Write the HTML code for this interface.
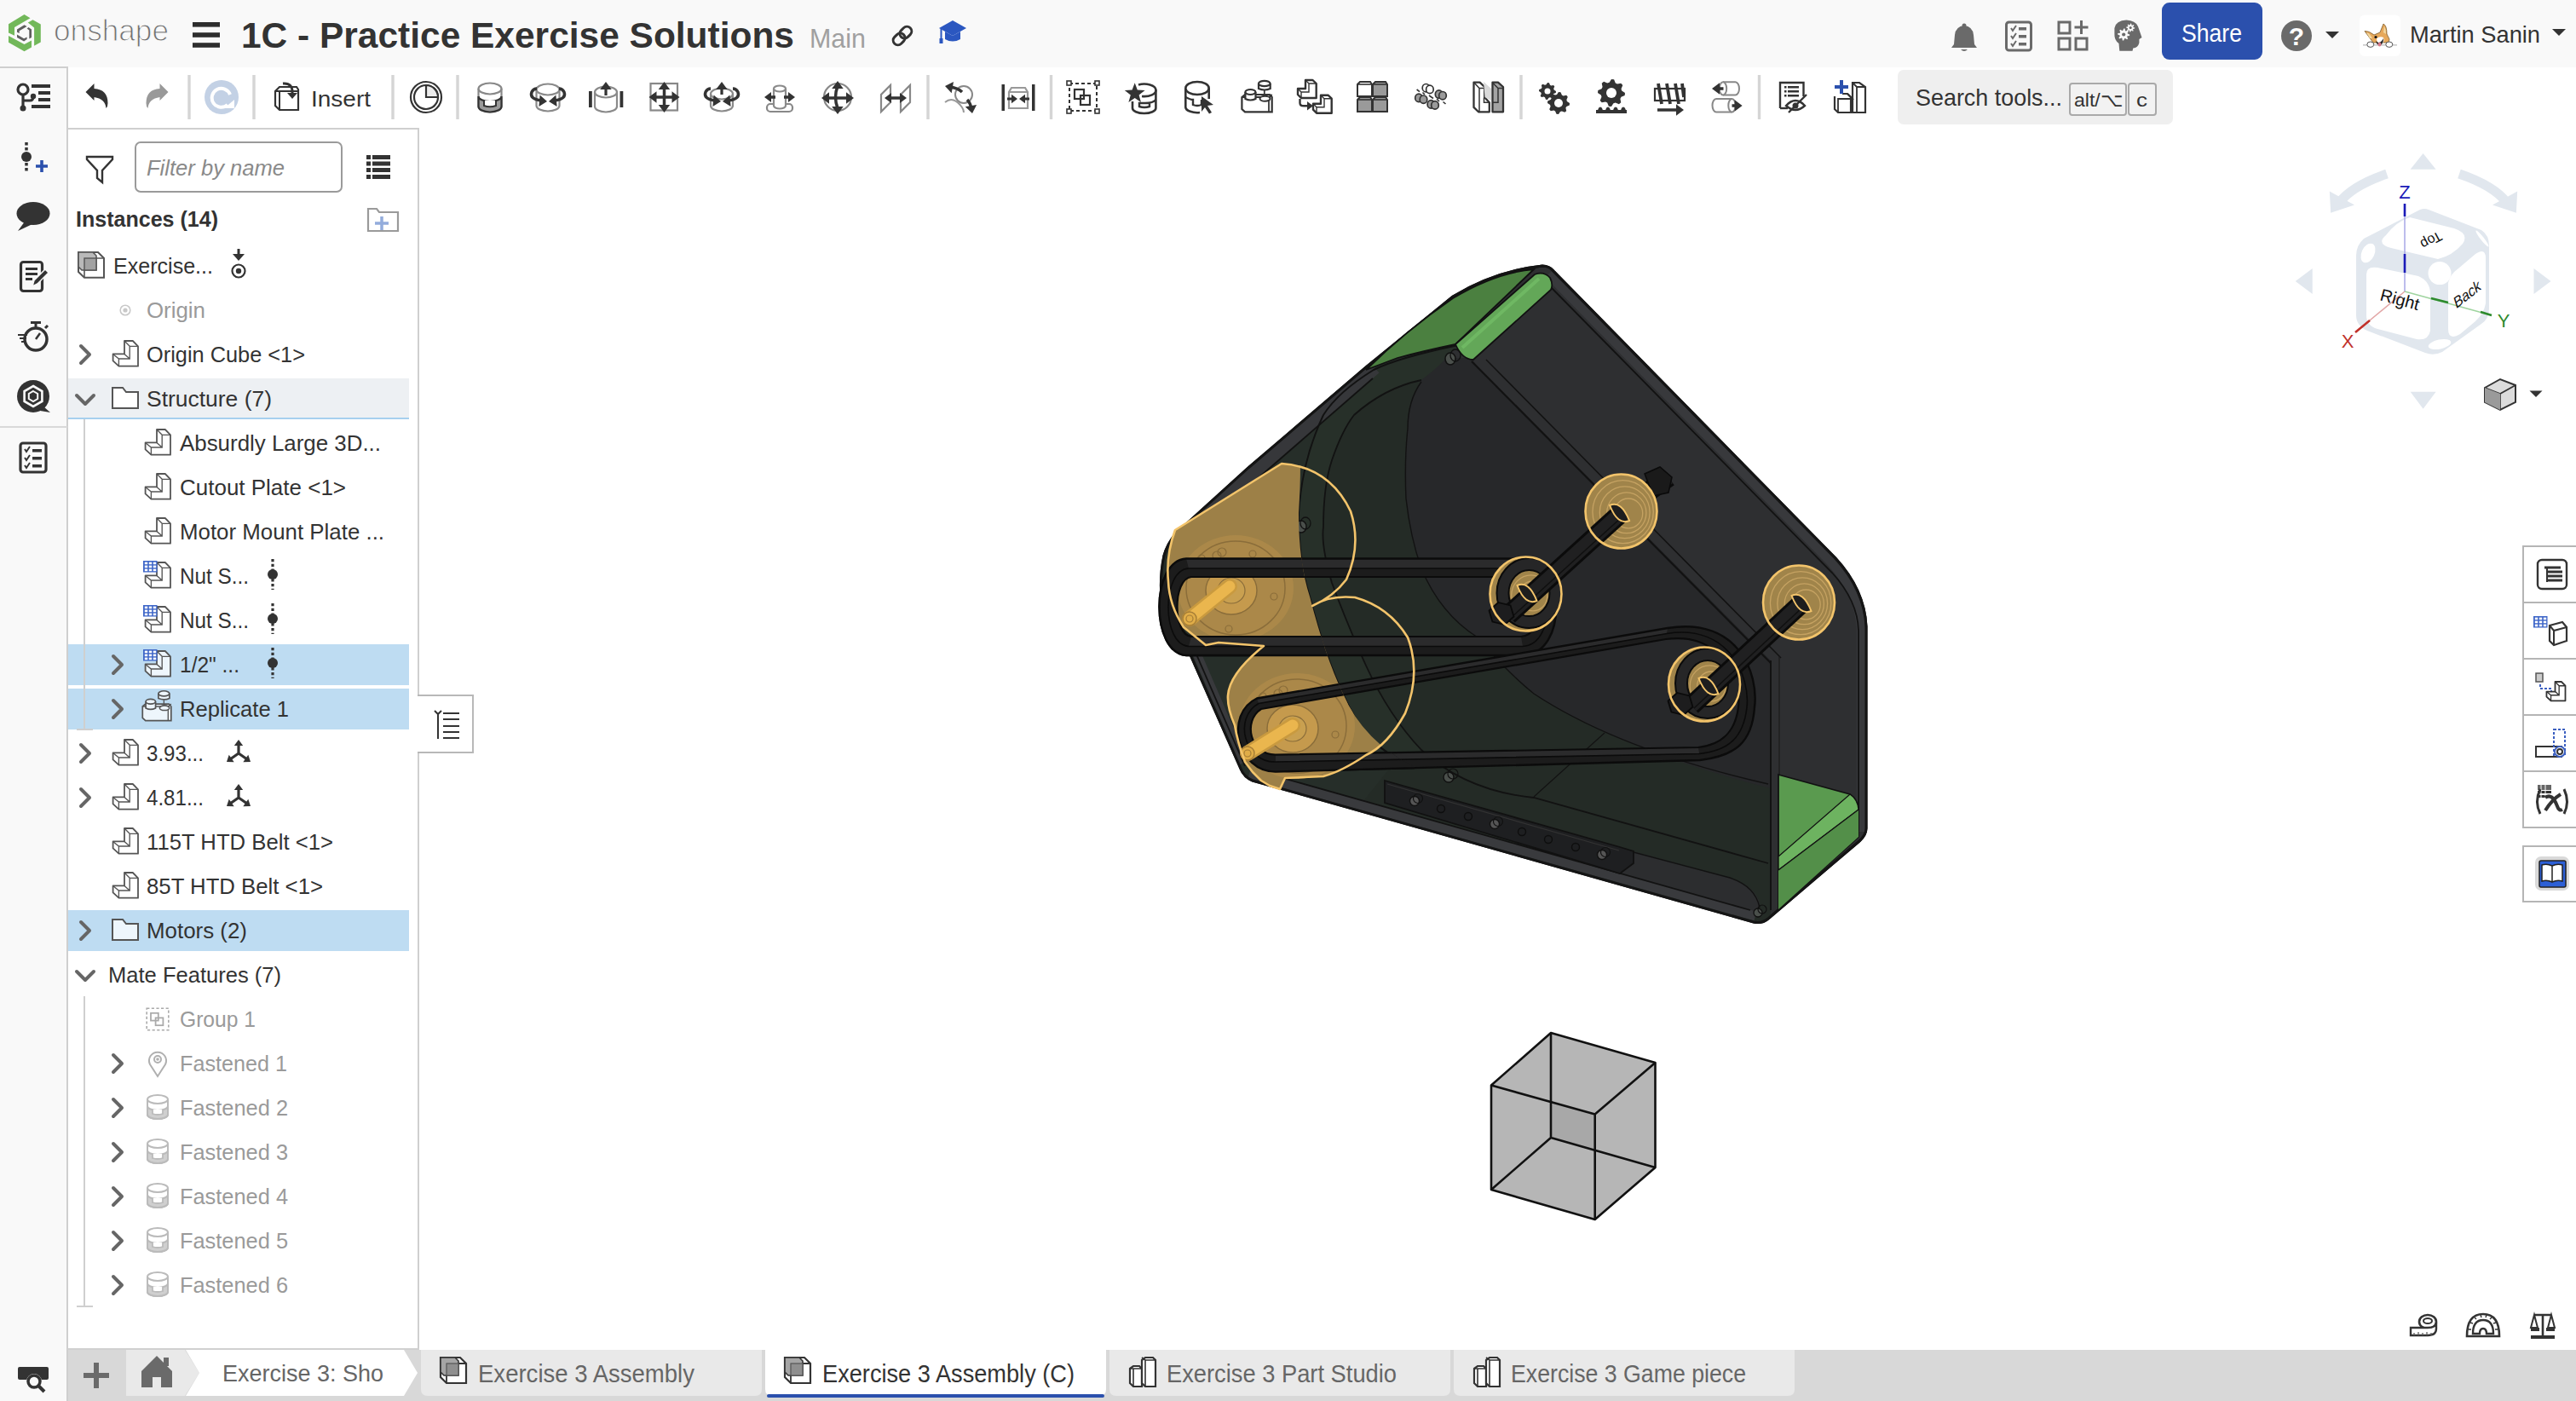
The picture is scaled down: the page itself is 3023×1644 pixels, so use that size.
<!DOCTYPE html>
<html><head><meta charset="utf-8"><title>Onshape</title>
<style>
html,body{margin:0;padding:0;width:3023px;height:1644px;overflow:hidden;background:#fff}
svg{position:absolute;left:0;top:0;display:block}
text{font-family:"Liberation Sans",sans-serif}
</style></head><body>
<svg width="3023" height="1644" viewBox="0 0 3023 1644">
<defs><clipPath id="silclip"><path d="M1810,312 Q1818,312 1823,318 L2154,655 Q2188,692 2190,735 L2190,972 Q2190,980 2182,987 L2075,1078 Q2068,1084 2058,1082 L1470,916 Q1460,912 1456,902 L1392,757 Q1372,745 1364,712 Q1360,680 1366,652 Q1370,638 1380,626 L1465,549 L1603,431 L1705,348 Q1755,318 1810,312 Z"/></clipPath><clipPath id="motclip"><path d="M1300,500 L1524,500 Q1528,540 1524,602 Q1524,660 1537,700 Q1555,770 1576,814 Q1600,870 1660,900 L1660,1000 L1300,1000 Z"/></clipPath></defs>
<rect x="0" y="0" width="3023" height="1644" fill="#ffffff" />
<rect x="0" y="0" width="3023" height="79" fill="#f9f9f9" />
<rect x="0" y="79" width="79" height="1565" fill="#f9f9f9" />
<rect x="0" y="78" width="80" height="2" fill="#cfcfcf" />
<rect x="78" y="78" width="2" height="1566" fill="#cfcfcf" />
<rect x="0" y="500" width="79" height="2" fill="#d9d9d9" />
<rect x="80" y="150" width="412" height="2" fill="#cfcfcf" />
<rect x="490" y="150" width="2" height="1434" fill="#cfcfcf" />
<rect x="80" y="1584" width="2943" height="60" fill="#d8d8d8" />
<rect x="80" y="1582" width="412" height="2" fill="#d0d0d0" />
<text x="63" y="48" font-size="35" fill="#707070" stroke="#f9f9f9" stroke-width="1.1" textLength="135" lengthAdjust="spacingAndGlyphs">onshape</text>
<text x="283" y="56" font-size="43" fill="#333" font-weight="bold" textLength="649" lengthAdjust="spacingAndGlyphs">1C - Practice Exercise Solutions</text>
<text x="950" y="56" font-size="32" fill="#a0a0a0" textLength="66" lengthAdjust="spacingAndGlyphs">Main</text>
<rect x="2537" y="3" width="118" height="67" rx="9" fill="#2b50ad"/>
<text x="2560" y="49" font-size="29.5" fill="#ffffff" textLength="71" lengthAdjust="spacingAndGlyphs">Share</text>
<text x="2828" y="50" font-size="28" fill="#333" textLength="153" lengthAdjust="spacingAndGlyphs">Martin Sanin</text>
<rect x="2227" y="82" width="323" height="64" rx="7" fill="#efefef"/>
<text x="2248" y="124" font-size="28" fill="#333" textLength="172" lengthAdjust="spacingAndGlyphs">Search tools...</text>
<rect x="2429" y="98" width="66" height="37" rx="3" fill="#f2f2f2" stroke="#a9a9a9" stroke-width="2"/>
<text x="2434" y="125" font-size="22" fill="#333" textLength="57" lengthAdjust="spacingAndGlyphs">alt/⌥</text>
<rect x="2498" y="98" width="32" height="37" rx="3" fill="#f2f2f2" stroke="#a9a9a9" stroke-width="2"/>
<text x="2507" y="125" font-size="22" fill="#333" textLength="13" lengthAdjust="spacingAndGlyphs">c</text>
<text x="365" y="125" font-size="26" fill="#333" textLength="70" lengthAdjust="spacingAndGlyphs">Insert</text>
<rect x="159" y="167" width="242" height="58" rx="6" fill="#fff" stroke="#9a9a9a" stroke-width="2"/>
<text x="172" y="206" font-size="26" fill="#8a8a8a" font-style="italic" textLength="162" lengthAdjust="spacingAndGlyphs">Filter by name</text>
<text x="89" y="266" font-size="26" fill="#333" font-weight="bold" textLength="167" lengthAdjust="spacingAndGlyphs">Instances (14)</text>
<rect x="80" y="444" width="400" height="47" fill="#edf0f3" />
<rect x="80" y="490" width="400" height="2" fill="#a6d0ee" />
<rect x="80" y="756" width="400" height="48" fill="#bedcf2" />
<rect x="80" y="808" width="400" height="48" fill="#bedcf2" />
<rect x="80" y="1068" width="400" height="48" fill="#bedcf2" />
<rect x="98" y="492" width="2" height="363" fill="#cfcfcf" />
<rect x="90" y="855" width="19" height="2" fill="#cfcfcf" />
<rect x="98" y="1169" width="2" height="364" fill="#cfcfcf" />
<rect x="90" y="1532" width="19" height="2" fill="#cfcfcf" />
<text x="133" y="321" font-size="26" fill="#333" textLength="117" lengthAdjust="spacingAndGlyphs">Exercise...</text>
<text x="172" y="373" font-size="26" fill="#9a9a9a" textLength="69" lengthAdjust="spacingAndGlyphs">Origin</text>
<text x="172" y="425" font-size="26" fill="#333" textLength="186" lengthAdjust="spacingAndGlyphs">Origin Cube &lt;1&gt;</text>
<text x="172" y="477" font-size="26" fill="#333" textLength="147" lengthAdjust="spacingAndGlyphs">Structure (7)</text>
<text x="211" y="529" font-size="26" fill="#333" textLength="236" lengthAdjust="spacingAndGlyphs">Absurdly Large 3D...</text>
<text x="211" y="581" font-size="26" fill="#333" textLength="195" lengthAdjust="spacingAndGlyphs">Cutout Plate &lt;1&gt;</text>
<text x="211" y="633" font-size="26" fill="#333" textLength="240" lengthAdjust="spacingAndGlyphs">Motor Mount Plate ...</text>
<text x="211" y="685" font-size="26" fill="#333" textLength="81" lengthAdjust="spacingAndGlyphs">Nut S...</text>
<text x="211" y="737" font-size="26" fill="#333" textLength="81" lengthAdjust="spacingAndGlyphs">Nut S...</text>
<text x="211" y="789" font-size="26" fill="#333" textLength="70" lengthAdjust="spacingAndGlyphs">1/2" ...</text>
<text x="211" y="841" font-size="26" fill="#333" textLength="128" lengthAdjust="spacingAndGlyphs">Replicate 1</text>
<text x="172" y="893" font-size="26" fill="#333" textLength="67" lengthAdjust="spacingAndGlyphs">3.93...</text>
<text x="172" y="945" font-size="26" fill="#333" textLength="67" lengthAdjust="spacingAndGlyphs">4.81...</text>
<text x="172" y="997" font-size="26" fill="#333" textLength="219" lengthAdjust="spacingAndGlyphs">115T HTD Belt &lt;1&gt;</text>
<text x="172" y="1049" font-size="26" fill="#333" textLength="207" lengthAdjust="spacingAndGlyphs">85T HTD Belt &lt;1&gt;</text>
<text x="172" y="1101" font-size="26" fill="#333" textLength="118" lengthAdjust="spacingAndGlyphs">Motors (2)</text>
<text x="127" y="1153" font-size="26" fill="#333" textLength="203" lengthAdjust="spacingAndGlyphs">Mate Features (7)</text>
<text x="211" y="1205" font-size="26" fill="#9a9a9a" textLength="89" lengthAdjust="spacingAndGlyphs">Group 1</text>
<text x="211" y="1257" font-size="26" fill="#9a9a9a" textLength="126" lengthAdjust="spacingAndGlyphs">Fastened 1</text>
<text x="211" y="1309" font-size="26" fill="#9a9a9a" textLength="127" lengthAdjust="spacingAndGlyphs">Fastened 2</text>
<text x="211" y="1361" font-size="26" fill="#9a9a9a" textLength="127" lengthAdjust="spacingAndGlyphs">Fastened 3</text>
<text x="211" y="1413" font-size="26" fill="#9a9a9a" textLength="127" lengthAdjust="spacingAndGlyphs">Fastened 4</text>
<text x="211" y="1465" font-size="26" fill="#9a9a9a" textLength="127" lengthAdjust="spacingAndGlyphs">Fastened 5</text>
<text x="211" y="1517" font-size="26" fill="#9a9a9a" textLength="127" lengthAdjust="spacingAndGlyphs">Fastened 6</text>
<path d="M148,1584 L217,1584 L234,1611 L217,1638 L148,1638 Z" fill="#e9e9e9"/>
<path d="M218,1584 L474,1584 L490,1611 L474,1638 L218,1638 L234,1611 Z" fill="#ffffff"/>
<text x="261" y="1621" font-size="28" fill="#666" textLength="189" lengthAdjust="spacingAndGlyphs">Exercise 3: Sho</text>
<path d="M494,1584 L894,1584 L894,1630 Q894,1638 886,1638 L502,1638 Q494,1638 494,1630 Z" fill="#e9e9e9"/>
<text x="561" y="1622" font-size="29" fill="#666" textLength="254" lengthAdjust="spacingAndGlyphs">Exercise 3 Assembly</text>
<path d="M898,1584 L1298,1584 L1298,1630 Q1298,1638 1290,1638 L906,1638 Q898,1638 898,1630 Z" fill="#ffffff"/>
<text x="965" y="1622" font-size="29" fill="#333" textLength="296" lengthAdjust="spacingAndGlyphs">Exercise 3 Assembly (C)</text>
<rect x="900" y="1636" width="396" height="4" rx="2" fill="#2b50ad"/>
<path d="M1302,1584 L1702,1584 L1702,1630 Q1702,1638 1694,1638 L1310,1638 Q1302,1638 1302,1630 Z" fill="#e9e9e9"/>
<text x="1369" y="1622" font-size="29" fill="#666" textLength="270" lengthAdjust="spacingAndGlyphs">Exercise 3 Part Studio</text>
<path d="M1706,1584 L2106,1584 L2106,1630 Q2106,1638 2098,1638 L1714,1638 Q1706,1638 1706,1630 Z" fill="#e9e9e9"/>
<text x="1773" y="1622" font-size="29" fill="#666" textLength="276" lengthAdjust="spacingAndGlyphs">Exercise 3 Game piece</text>
<rect x="2961" y="641" width="70" height="330" fill="#fff" stroke="#b5b5b5" stroke-width="2"/>
<rect x="2961" y="706" width="62" height="2" fill="#b5b5b5" />
<rect x="2961" y="772" width="62" height="2" fill="#b5b5b5" />
<rect x="2961" y="838" width="62" height="2" fill="#b5b5b5" />
<rect x="2961" y="904" width="62" height="2" fill="#b5b5b5" />
<rect x="2961" y="993" width="70" height="65" fill="#fff" stroke="#b5b5b5" stroke-width="2"/>
<path d="M10,28.2 L28.5,17 L35.5,21.3 L17,32 L17,41.7 L10,38.6 Z" fill="#72b85a"/><path d="M32.8,26.6 L38.5,23.2 L47.8,28.6 L47.8,49.4 L40.1,53.8 L40.1,32.4 Z" fill="#72b85a"/><path d="M10,42 L28.5,52 L37,47.5 L37,55.6 L28.5,60.2 L10,49.8 Z" fill="#72b85a"/><path d="M20,34.4 L28.5,29.3 L31.6,30.9 L22.7,36.3 L22.7,39 L20,37.8 Z" fill="#5e5e5e"/><path d="M31.6,33.6 L33.5,32 L37,34.4 L37,44 L34.3,45.5 L34.3,35.5 Z" fill="#5e5e5e"/><path d="M20,40.5 L28.1,45.2 L31.6,43.6 L31.6,45.9 L28.1,48.6 L20,44 Z" fill="#5e5e5e"/>
<rect x="226" y="26" width="32" height="5.6" fill="#2e2e2e"/><rect x="226" y="38.2" width="32" height="5.6" fill="#2e2e2e"/><rect x="226" y="50.2" width="32" height="5.6" fill="#2e2e2e"/>
<g transform="translate(1059,42)"><g transform="rotate(-45)"><rect x="-13" y="-5.5" width="15" height="11" rx="5.5" fill="none" stroke="#333" stroke-width="3"/><rect x="-2" y="-5.5" width="15" height="11" rx="5.5" fill="none" stroke="#333" stroke-width="3"/></g></g>
<g transform="translate(1118,37)"><path d="M-16,-4 L0,-13 L16,-4 L0,5 Z" fill="#2b57c0"/><path d="M-9,0 L-9,9 Q0,14 9,9 L9,0 L0,5 Z" fill="#2b57c0"/><rect x="-14.5" y="-3" width="2" height="13" fill="#2b57c0"/><rect x="-15.5" y="8" width="4" height="6" fill="#2b57c0"/></g>
<g transform="translate(2305,45)"><path d="M-15,11 L-12,7 L-11,-4 Q-10,-14 0,-15 Q10,-14 11,-4 L12,7 L15,11 Z" fill="#6a6a6a"/><circle cx="0" cy="-15" r="2.5" fill="#6a6a6a"/><path d="M-4,13 Q0,17 4,13 Z" fill="#6a6a6a"/></g>
<g transform="translate(2369,42)"><rect x="-14.5" y="-16" width="29" height="33" rx="3" fill="none" stroke="#6a6a6a" stroke-width="3"/><path d="M-9,-9 L-7,-6 L-3,-12 M-9,0 L-7,3 L-3,-3 M-9,9 L-7,12 L-3,6" stroke="#6a6a6a" stroke-width="2" fill="none"/><rect x="0" y="-10" width="9" height="3.5" fill="#6a6a6a"/><rect x="0" y="-1" width="9" height="3.5" fill="#6a6a6a"/><rect x="0" y="8" width="9" height="3.5" fill="#6a6a6a"/></g>
<g transform="translate(2433,42)"><rect x="-17" y="-16" width="13" height="13" fill="none" stroke="#6a6a6a" stroke-width="3"/><rect x="-17" y="3" width="13" height="13" fill="none" stroke="#6a6a6a" stroke-width="3"/><rect x="3" y="3" width="13" height="13" fill="none" stroke="#6a6a6a" stroke-width="3"/><path d="M9.5,-18 L9.5,-2 M1.5,-10 L17.5,-10" stroke="#6a6a6a" stroke-width="3"/></g>
<path d="M2481.4,33 Q2483,24 2495.5,23.5 Q2506,24 2509,31 L2513.5,44 L2510.4,46 L2510.4,50.3 Q2509,56 2503.3,56.6 L2502.5,59.7 L2487.3,59.7 L2486.5,51 Q2481,47 2481.4,40 Z" fill="#6a6a6a"/><path d="M2499.2,40.5 L2499.1,41.9 L2496.6,42.3 L2496.2,43.1 L2497.1,45.4 L2496.1,46.3 L2494.0,44.9 L2493.1,45.2 L2492.2,47.5 L2490.8,47.4 L2490.4,44.9 L2489.6,44.5 L2487.3,45.4 L2486.4,44.4 L2487.8,42.3 L2487.5,41.4 L2485.2,40.5 L2485.3,39.1 L2487.8,38.7 L2488.2,37.9 L2487.3,35.6 L2488.3,34.7 L2490.4,36.1 L2491.3,35.8 L2492.2,33.5 L2493.6,33.6 L2494.0,36.1 L2494.8,36.5 L2497.1,35.6 L2498.0,36.6 L2496.6,38.7 L2496.9,39.6 Z" fill="#f9f9f9"/><circle cx="2492.2" cy="40.5" r="2.1" fill="#6a6a6a"/><path d="M2505.2,32.6 L2505.1,33.6 L2503.3,33.9 L2503.0,34.5 L2503.7,36.1 L2503.0,36.8 L2501.5,35.7 L2500.9,35.9 L2500.2,37.6 L2499.2,37.5 L2498.9,35.7 L2498.3,35.4 L2496.7,36.1 L2496.0,35.4 L2497.1,33.9 L2496.9,33.3 L2495.2,32.6 L2495.3,31.6 L2497.1,31.3 L2497.4,30.7 L2496.7,29.1 L2497.4,28.4 L2498.9,29.5 L2499.5,29.3 L2500.2,27.6 L2501.2,27.7 L2501.5,29.5 L2502.1,29.8 L2503.7,29.1 L2504.4,29.8 L2503.3,31.3 L2503.5,31.9 Z" fill="#f9f9f9"/><circle cx="2500.2" cy="32.6" r="1.5" fill="#6a6a6a"/>
<g transform="translate(2695,42)"><circle r="18" fill="#6a6a6a"/></g>
<text x="2695" y="53" font-size="30" fill="#ffffff" font-weight="bold" text-anchor="middle">?</text>
<path d="M2729,37 L2745,37 L2737,45 Z" fill="#333"/>
<rect x="2769" y="17.6" width="48" height="48.4" rx="6" fill="#ffffff"/>
<path d="M2773,52.8 L2813,52.8" stroke="#bbb" stroke-width="1.2"/><path d="M2775,36.5 Q2780,36 2786,41 L2793,38 L2797,28 Q2801,30 2801,40 L2804,46 L2803,50 L2785,50 Z" fill="#e7a95c" stroke="#7a5a2a" stroke-width="0.8"/><path d="M2777,38 Q2781,39 2784,45 L2781,45 Z" fill="#f3d9a2"/><path d="M2798,31 Q2800,34 2800,40 L2797,38 Z" fill="#f3d9a2"/><path d="M2789,45 Q2793,42 2797,44 Q2799,50 2794,52 Q2789,51 2789,45 Z" fill="#fff"/><path d="M2788,48 Q2793,53 2797,45 Q2797,52 2793,53 Q2789,53 2788,48 Z" fill="#222"/><ellipse cx="2792.5" cy="52" rx="2" ry="2.6" fill="#d77a8a"/><circle cx="2788" cy="43.5" r="1.6" fill="#111"/><ellipse cx="2781.8" cy="52.2" rx="4" ry="3.2" fill="#fff" stroke="#555" stroke-width="1"/><ellipse cx="2803.8" cy="52.2" rx="4" ry="3.2" fill="#fff" stroke="#555" stroke-width="1"/>
<path d="M2995,34 L3011,34 L3003,42 Z" fill="#333"/>
<g transform="translate(39,115)"><circle cx="-12" cy="-10" r="6" fill="none" stroke="#333" stroke-width="3.2"/><path d="M-12,-4 L-12,12 M-12,3 L-4,3 Q0,3 0,-2" fill="none" stroke="#333" stroke-width="3.2"/><circle cx="0" cy="-2" r="3.2" fill="#333"/><circle cx="-12" cy="12" r="3.5" fill="#333"/><rect x="-2" y="-16" width="22" height="4" fill="#333"/><rect x="6" y="-8" width="14" height="4" fill="#333"/><rect x="6" y="0" width="14" height="4" fill="#333"/><rect x="-2" y="8" width="22" height="4" fill="#333"/></g>
<g transform="translate(39,185)"><path d="M-8,-18 L-8,18" stroke="#333" stroke-width="3.5" stroke-dasharray="3.5 2.5"/><circle cx="-8" cy="-1" r="6" fill="#333"/><path d="M10,3 L10,17 M3,10 L17,10" stroke="#2b50ad" stroke-width="3.6"/></g>
<g transform="translate(39,254)"><ellipse cx="0" cy="-3.5" rx="19.5" ry="13.5" fill="#333"/><path d="M-10,6 L-18,17 L-1,9 Z" fill="#333"/></g>
<g transform="translate(40,324)"><rect x="-15.5" y="-16.5" width="25" height="34" rx="3" fill="none" stroke="#333" stroke-width="3.2"/><rect x="-10" y="-10" width="14" height="3" fill="#333"/><rect x="-10" y="-4" width="14" height="3" fill="#333"/><rect x="-10" y="2" width="8" height="3" fill="#333"/><path d="M-2,12 L0,5 L13,-8 L17,-4 L4,9 Z" fill="#333" stroke="#f9f9f9" stroke-width="1.5"/></g>
<g transform="translate(40,395)"><circle cx="2" cy="3" r="13" fill="none" stroke="#333" stroke-width="3.5"/><rect x="-4" y="-18" width="12" height="3" fill="#333"/><rect x="0.5" y="-16" width="3" height="5" fill="#333"/><path d="M13,-10 L16,-13" stroke="#333" stroke-width="3"/><path d="M2,3 L7,-4" stroke="#333" stroke-width="2.5"/><rect x="-19" y="-3" width="11" height="2" fill="#333"/><rect x="-17" y="1" width="9" height="2" fill="#333"/><rect x="-15" y="5" width="6" height="2" fill="#333"/><rect x="-9" y="-1" width="8" height="6" fill="#f9f9f9"/></g>
<g transform="translate(39,465)"><circle r="19" fill="#333"/><path d="M12,12 L20,19 L8,17 Z" fill="#333"/><path d="M0,-12 L10.4,-6 L10.4,6 L0,12 L-10.4,6 L-10.4,-6 Z" fill="none" stroke="#f9f9f9" stroke-width="2.6"/><path d="M0,-6 L5.2,-3 L5.2,3 L0,6 L-5.2,3 L-5.2,-3 Z" fill="none" stroke="#f9f9f9" stroke-width="2"/></g>
<g transform="translate(39,537)"><rect x="-15" y="-17" width="30" height="34" rx="3" fill="none" stroke="#333" stroke-width="3.2"/><path d="M-10,-10 L-8,-7 L-4,-13 M-10,0 L-8,3 L-4,-3 M-10,9 L-8,12 L-4,6" stroke="#333" stroke-width="2" fill="none"/><rect x="-1" y="-10" width="11" height="3.5" fill="#333"/><rect x="-1" y="-1" width="11" height="3.5" fill="#333"/><rect x="-1" y="8" width="11" height="3.5" fill="#333"/></g>
<g transform="translate(39,1618)"><rect x="-18" y="-14" width="36" height="15" rx="2" fill="#333"/><circle cx="1" cy="3" r="9" fill="#f9f9f9"/><circle cx="1" cy="3" r="7" fill="none" stroke="#333" stroke-width="3.5"/><path d="M6,8 L13,15" stroke="#333" stroke-width="4"/></g>
<g transform="translate(113.5,113)"><path d="M-13,-5 L-3,-15 L-3,-9 Q13,-8 13,8 Q13,12 11,14 Q10,3 -3,1 L-3,5 Z" fill="#333"/></g>
<g transform="translate(184.5,113)"><path d="M13,-5 L3,-15 L3,-9 Q-13,-8 -13,8 Q-13,12 -11,14 Q-10,3 3,1 L3,5 Z" fill="#999"/></g>
<rect x="220.3" y="88" width="3.4" height="52" fill="#d5d5d5" />
<rect x="296.3" y="88" width="3.4" height="52" fill="#d5d5d5" />
<rect x="459.3" y="88" width="3.4" height="52" fill="#d5d5d5" />
<rect x="535.3" y="88" width="3.4" height="52" fill="#d5d5d5" />
<rect x="1087.3" y="88" width="3.4" height="52" fill="#d5d5d5" />
<rect x="1231.8" y="88" width="3.4" height="52" fill="#d5d5d5" />
<rect x="1783.3" y="88" width="3.4" height="52" fill="#d5d5d5" />
<rect x="2062.8" y="88" width="3.4" height="52" fill="#d5d5d5" />
<g transform="translate(260,114)"><circle r="20" fill="#c3d1e5"/><path d="M7,9 A11,11 0 1 1 10,-3" fill="none" stroke="#fff" stroke-width="4"/><path d="M3,13 L15,13 L15,3 Z" fill="#fff"/></g>
<g transform="translate(336,113)"><path d="M-13,-6 L-8,-11 L12,-11 L14,-8 L14,16 L-8,16 L-13,11 Z" fill="#fff" stroke="#333" stroke-width="2.2"/><path d="M-8,-6 L14,-6 M-8,-6 L-8,16 M-13,-6 L-8,-6" stroke="#333" stroke-width="2" fill="none"/><path d="M-4,-15 Q8,-16 7,-3" fill="none" stroke="#333" stroke-width="3"/><path d="M1,-4 L13,-4 L7,3 Z" fill="#333"/></g>
<g transform="translate(500,114)"><circle r="18" fill="none" stroke="#333" stroke-width="2.2"/><circle r="14" fill="none" stroke="#333" stroke-width="2.2"/><path d="M0,-14 A14,14 0 0 1 14,0 L0,0 Z" fill="#ececec" stroke="#333" stroke-width="2.2"/></g>
<g transform="translate(575,114)"><path d="M-13.5,-10 L-13.5,11 A13.5,6.5 0 0 0 13.5,11 L13.5,-10" fill="#fff" stroke="#888" stroke-width="2.2"/><ellipse cx="0" cy="-10" rx="13.5" ry="6.5" fill="#fff" stroke="#888" stroke-width="2.2"/><path d="M-13.5,-1 A13.5,6 0 0 0 13.5,-1 L13.5,11 A13.5,6.5 0 0 1 -13.5,11 Z" fill="#9a9a9a" stroke="#333" stroke-width="2.2"/><path d="M-7,4 L-7,10 Q0,12.5 7,10 L7,4" fill="#fff" stroke="#333" stroke-width="2"/></g>
<g transform="translate(643,114)"><path d="M-13.5,-9 L-13.5,10 A13.5,6.5 0 0 0 13.5,10 L13.5,-9" fill="#fff" stroke="#8a8a8a" stroke-width="2.2"/><ellipse cx="0" cy="-9" rx="13.5" ry="6.5" fill="#fff" stroke="#8a8a8a" stroke-width="2.2"/><path d="M-8,4 Q-22,2 -19,-6 Q-17,-10 -13,-10" fill="none" stroke="#333" stroke-width="3.5"/><path d="M8,4 Q22,2 19,-6 Q17,-10 13,-10" fill="none" stroke="#333" stroke-width="3.5"/><path d="M-1.0,5.0 L-10.6,10.9 L-9.4,-2.5 Z" fill="#333333"/><path d="M1.0,5.0 L9.4,-2.5 L10.6,10.9 Z" fill="#333333"/></g>
<g transform="translate(711,114)"><path d="M-13,-6 L-13,11 A13,6.5 0 0 0 13,11 L13,-6" fill="#fff" stroke="#8a8a8a" stroke-width="2.2"/><ellipse cx="0" cy="-6" rx="13" ry="6.5" fill="#fff" stroke="#8a8a8a" stroke-width="2.2"/><rect x="-20" y="-7" width="3.8" height="19" fill="#333"/><rect x="16.5" y="-7" width="3.8" height="19" fill="#333"/><rect x="-1.6" y="-10" width="3.2" height="8" fill="#333"/><path d="M0.0,-18.0 L6.7,-9.0 L-6.8,-9.0 Z" fill="#333333"/></g>
<g transform="translate(779.5,114)"><rect x="-16" y="-16" width="31.5" height="31.5" fill="none" stroke="#888" stroke-width="2.2"/><path d="M0,-12 L0,12 M-12,0 L12,0" stroke="#333" stroke-width="3.5"/><path d="M0.0,-18.0 L6.7,-9.0 L-6.8,-9.0 Z" fill="#333333"/><path d="M0.0,18.0 L-6.8,9.0 L6.7,9.0 Z" fill="#333333"/><path d="M-18.0,0.0 L-9.0,-6.8 L-9.0,6.7 Z" fill="#333333"/><path d="M18.0,0.0 L9.0,6.8 L9.0,-6.8 Z" fill="#333333"/></g>
<g transform="translate(847,114)"><path d="M-13,-4 L-13,10 A13,6.5 0 0 0 13,10 L13,-4" fill="#fff" stroke="#8a8a8a" stroke-width="2.2"/><ellipse cx="0" cy="-4" rx="13" ry="6.5" fill="#fff" stroke="#8a8a8a" stroke-width="2.2"/><path d="M-8,4 Q-22,2 -19,-6 Q-17,-10 -13,-10" fill="none" stroke="#333" stroke-width="3.5"/><path d="M8,4 Q22,2 19,-6 Q17,-10 13,-10" fill="none" stroke="#333" stroke-width="3.5"/><path d="M-1.0,5.0 L-10.6,10.9 L-9.4,-2.5 Z" fill="#333333"/><path d="M1.0,5.0 L9.4,-2.5 L10.6,10.9 Z" fill="#333333"/><rect x="-1.6" y="-10" width="3.2" height="7" fill="#333"/><path d="M0.0,-18.0 L6.7,-9.0 L-6.8,-9.0 Z" fill="#333333"/></g>
<g transform="translate(915,114)"><rect x="-15" y="8" width="30" height="9" rx="4" fill="#fff" stroke="#888" stroke-width="2.2"/><path d="M-7,-10 L-7,10 A7,3.5 0 0 0 7,10 L7,-10" fill="#fff" stroke="#8a8a8a" stroke-width="2.2"/><ellipse cx="0" cy="-10" rx="7" ry="3.5" fill="#fff" stroke="#8a8a8a" stroke-width="2.2"/><path d="M-13,0 L-5,0 M5,0 L13,0" stroke="#333" stroke-width="3.5"/><path d="M-18.0,0.0 L-10.0,-6.0 L-10.0,6.0 Z" fill="#333333"/><path d="M18.0,0.0 L10.0,6.0 L10.0,-6.0 Z" fill="#333333"/></g>
<g transform="translate(983,114)"><circle r="16" fill="none" stroke="#888" stroke-width="2.2"/><path d="M-14,1 L14,1" stroke="#333" stroke-width="3.5"/><path d="M0,-13 Q-5,0 0,13" fill="none" stroke="#333" stroke-width="3.5"/><path d="M0.0,-19.0 L6.7,-10.0 L-6.8,-10.0 Z" fill="#333333"/><path d="M0.0,20.0 L-6.8,11.0 L6.7,11.0 Z" fill="#333333"/><path d="M-19.0,1.0 L-10.0,-5.8 L-10.0,7.7 Z" fill="#333333"/><path d="M19.0,1.0 L10.0,7.8 L10.0,-5.8 Z" fill="#333333"/></g>
<g transform="translate(1051,114)"><path d="M-17,17 L-17,-3 L-6,-14 L-6,6 Z M6,17 L6,-3 L17,-14 L17,6 Z" fill="none" stroke="#888" stroke-width="2.2"/><path d="M-9,1 L9,1" stroke="#333" stroke-width="3.5"/><path d="M-13.0,1.0 L-5.0,-5.0 L-5.0,7.0 Z" fill="#333333"/><path d="M13.0,1.0 L5.0,7.0 L5.0,-5.0 Z" fill="#333333"/></g>
<g transform="translate(1127,114)"><circle cx="4" cy="-3" r="10" fill="none" stroke="#888" stroke-width="2"/><path d="M-18,6 Q-8,-2 2,12 Q4,15 4,18" fill="none" stroke="#999" stroke-width="2"/><path d="M-13,-12 Q-3,-11 2,-6" fill="none" stroke="#333" stroke-width="3.5"/><path d="M8,3 Q12,7 13,14" fill="none" stroke="#333" stroke-width="3.5"/><path d="M-18.0,-13.0 L-8.0,-18.1 L-10.3,-4.8 Z" fill="#333333"/><path d="M14.0,19.0 L5.8,11.3 L19.1,9.0 Z" fill="#333333"/></g>
<g transform="translate(1195,114)"><rect x="-19.5" y="-15" width="3.5" height="31" fill="#333"/><rect x="16" y="-15" width="3.5" height="31" fill="#333"/><path d="M-11,-6 L-8,-11 L8,-11 L11,-6 L11,13 L-11,13 Z" fill="none" stroke="#999" stroke-width="2.2"/><path d="M-11,-6 L11,-6" stroke="#999" stroke-width="2"/><path d="M-13,2 L-6,2 M6,2 L13,2" stroke="#333" stroke-width="3"/><path d="M-1.0,2.0 L-8.0,7.2 L-8.0,-3.2 Z" fill="#333333"/><path d="M1.0,2.0 L8.0,-3.3 L8.0,7.2 Z" fill="#333333"/></g>
<g transform="translate(1271,114)"><rect x="-16" y="-16" width="32" height="32" fill="none" stroke="#333" stroke-width="2" stroke-dasharray="4 3"/><rect x="-19" y="-19" width="5" height="5" fill="#fff" stroke="#333" stroke-width="1.6"/><rect x="14" y="-19" width="5" height="5" fill="#fff" stroke="#333" stroke-width="1.6"/><rect x="-19" y="14" width="5" height="5" fill="#fff" stroke="#333" stroke-width="1.6"/><rect x="14" y="14" width="5" height="5" fill="#fff" stroke="#333" stroke-width="1.6"/><rect x="-10" y="-9" width="11" height="11" fill="#fff" stroke="#333" stroke-width="2.2"/><rect x="-3" y="-2" width="11" height="11" fill="none" stroke="#333" stroke-width="2.2"/></g>
<g transform="translate(1338,114)"><path d="M-9,5 L-9,13 A13.7,6 0 0 0 18.4,13 L18.4,-8.5" fill="none" stroke="#333" stroke-width="2.6"/><path d="M-2,-14.5 A13.7,7 0 0 1 18.4,-8.5 A13.7,7 0 0 1 2,-1" fill="none" stroke="#333" stroke-width="2.6"/><path d="M18.4,3 A13.7,6 0 0 1 5,7 L-1,7 L-1,11 Q5,13 11,11 L11,7" fill="none" stroke="#333" stroke-width="2.4"/><path d="M-6.3,-16.7 L-3.2,-8.4 L5.6,-8.1 L-1.4,-2.6 L1.0,5.9 L-6.3,1.0 L-13.6,5.9 L-11.2,-2.6 L-18.2,-8.1 L-9.4,-8.4 Z" fill="#333"/></g>
<g transform="translate(1405,114)"><path d="M-13.7,-10.5 L-13.7,12 A13.7,6.5 0 0 0 3,18" fill="none" stroke="#333" stroke-width="2.6"/><ellipse cx="0" cy="-10.5" rx="13.7" ry="7.5" fill="#fff" stroke="#333" stroke-width="2.6"/><path d="M13.7,-10.5 L13.7,2" stroke="#333" stroke-width="2.6"/><path d="M-13.7,0 Q-8,3 -5,3 L-5,9 Q0,11 5,9 L5,3" fill="none" stroke="#333" stroke-width="2.4"/><path d="M5,-1 L19,9 L12,10 L17,18 L14,19.5 L9,12 L5,17 Z" fill="#333"/></g>
<g transform="translate(1475,114)"><path d="M-17.6,0 L-14,-3 L15,-3 L17.7,0 L17.7,17.4 L-14,17.4 L-17.6,14 Z" fill="#fff" stroke="#333" stroke-width="2.2"/><path d="M-17.6,0 L14,0 L17.7,-3 M14,0 L14,17.4" fill="none" stroke="#333" stroke-width="1.7600000000000002"/><path d="M-13.6,-6 L-13.6,2 Q-7.6,5 -1.5,2 L-1.5,-6" fill="#fff" stroke="#333" stroke-width="2.2"/><ellipse cx="-7.6" cy="-6" rx="6" ry="3" fill="#fff" stroke="#333" stroke-width="2.2"/><path d="M2,-16 L2,-10 Q9,-7 15.7,-10 L15.7,-16" fill="#fff" stroke="#333" stroke-width="2.2"/><ellipse cx="8.8" cy="-16" rx="6.8" ry="3.2" fill="#fff" stroke="#333" stroke-width="2.2"/><path d="M8.8,-8 L8.8,-1" stroke="#333" stroke-width="1.7600000000000002"/><ellipse cx="9.5" cy="1.8" rx="6" ry="3" fill="#fff" stroke="#333" stroke-width="1.9800000000000002"/></g>
<g transform="translate(1543,114)"><path d="M-11,-20 L-2.5,-20 L1.6999999999999993,-16 L1.6999999999999993,1 L-16,1 L-20,-3 L-20,-10 L-11,-10 Z" fill="#fff" stroke="#333" stroke-width="2.4" stroke-linejoin="round"/><path d="M-11,-20 L-7,-16 L-7,-6 L-16,-6 L-20,-10 M-7,-16 L1.6999999999999993,-16 M-16,-6 L-16,1" fill="none" stroke="#333" stroke-width="1.4"/><path d="M7,-2.3 L15.5,-2.3 L19.7,1.7000000000000002 L19.7,18.7 L2,18.7 L-2,14.7 L-2,7.7 L7,7.7 Z" fill="#fff" stroke="#333" stroke-width="2.4" stroke-linejoin="round"/><path d="M7,-2.3 L11,1.7000000000000002 L11,11.7 L2,11.7 L-2,7.7 M11,1.7000000000000002 L19.7,1.7000000000000002 M2,11.7 L2,18.7" fill="none" stroke="#333" stroke-width="1.4"/><path d="M-17.5,2 L-17.5,7 Q-17.5,10.3 -13,10.3 L-7,10.3" fill="none" stroke="#333" stroke-width="2.4"/><path d="M-2.0,10.3 L-9.0,15.6 L-9.0,5.1 Z" fill="#333333"/></g>
<g transform="translate(1611,114)"><path d="M-18,-15 L-15,-18 L-3,-18 L-1,-15 L-1,-1 L-18,-1 Z" fill="#fff" stroke="#333" stroke-width="2"/><path d="M-18,-15 L-1,-15" stroke="#333" stroke-width="1.6"/><path d="M0,-15 L3,-18 L15,-18 L17,-15 L17,-1 L0,-1 Z" fill="#9a9a9a" stroke="#333" stroke-width="2"/><path d="M0,-15 L17,-15" stroke="#333" stroke-width="1.6"/><path d="M-18,3 L-15,0 L-3,0 L-1,3 L-1,17 L-18,17 Z" fill="#9a9a9a" stroke="#333" stroke-width="2"/><path d="M-18,3 L-1,3" stroke="#333" stroke-width="1.6"/><path d="M0,3 L3,0 L15,0 L17,3 L17,17 L0,17 Z" fill="#9a9a9a" stroke="#333" stroke-width="2"/><path d="M0,3 L17,3" stroke="#333" stroke-width="1.6"/></g>
<ellipse cx="1673.5" cy="103.2" rx="4.3" ry="4.7" fill="#fff" stroke="#333" stroke-width="1.7"/><ellipse cx="1677.9" cy="104.9" rx="4.3" ry="4.7" fill="#fff" stroke="#333" stroke-width="1.7"/><ellipse cx="1665" cy="114.9" rx="4.3" ry="4.7" fill="#9a9a9a" stroke="#333" stroke-width="1.7"/><ellipse cx="1670.5" cy="116.7" rx="4.3" ry="4.7" fill="#9a9a9a" stroke="#333" stroke-width="1.7"/><ellipse cx="1688.6" cy="110.6" rx="4.3" ry="4.7" fill="#9a9a9a" stroke="#333" stroke-width="1.7"/><ellipse cx="1693" cy="112.2" rx="4.3" ry="4.7" fill="#9a9a9a" stroke="#333" stroke-width="1.7"/><ellipse cx="1679.4" cy="122.4" rx="4.3" ry="4.7" fill="#9a9a9a" stroke="#333" stroke-width="1.7"/><ellipse cx="1684" cy="123.4" rx="4.3" ry="4.7" fill="#9a9a9a" stroke="#333" stroke-width="1.7"/><path d="M1662.6,105 L1666,107.7 M1677,112 L1682,115.5 M1693.5,119.5 L1696.5,122 M1669.5,108.5 L1672,111 M1686,116 L1689,119" stroke="#333" stroke-width="1.6"/>
<path d="M1732,96.6 L1736.6,96.6 L1742.2,102 L1742.2,114.2 L1747.8,120.3 L1747.8,131.3 L1735,131.3 L1729.5,125.9 L1729.5,96.6 Z" fill="#fff" stroke="#333" stroke-width="2.3" stroke-linejoin="round"/><path d="M1730,97 L1736,103.5 L1742.2,103.5 M1736,103.5 L1736,131 M1741.5,114.5 L1741.5,120.3 L1747.5,120.3" fill="none" stroke="#333" stroke-width="1.5"/><path d="M1741,96 L1750,104 L1750,118 L1742.5,114 Z" fill="#d9d9d9"/><path d="M1751.5,96.6 L1758,96.6 L1764,102 L1764,131.3 L1751.5,131.3 Z" fill="#a3a3a3" stroke="#333" stroke-width="2.3" stroke-linejoin="round"/><path d="M1752,97.5 L1758,103.5 L1764,103.5 M1758,103.5 L1758,120.3 L1752,120.3" fill="none" stroke="#333" stroke-width="1.5"/>
<g transform="translate(1823,114)"><path d="M3.0,-7.0 L2.8,-5.0 L0.2,-4.0 L-0.5,-2.7 L0.1,0.1 L-1.4,1.3 L-4.0,0.2 L-5.5,0.7 L-7.0,3.0 L-9.0,2.8 L-10.0,0.2 L-11.3,-0.5 L-14.1,0.1 L-15.3,-1.4 L-14.2,-4.0 L-14.7,-5.5 L-17.0,-7.0 L-16.8,-9.0 L-14.2,-10.0 L-13.5,-11.3 L-14.1,-14.1 L-12.6,-15.3 L-10.0,-14.2 L-8.5,-14.7 L-7.0,-17.0 L-5.0,-16.8 L-4.0,-14.2 L-2.7,-13.5 L0.1,-14.1 L1.3,-12.6 L0.2,-10.0 L0.7,-8.5 Z" fill="#333"/><circle cx="-7" cy="-7" r="3.5" fill="#fff"/><path d="M19.0,7.0 L18.8,9.5 L15.4,10.9 L14.4,12.6 L15.2,16.2 L13.2,17.8 L9.9,16.4 L8.0,16.9 L6.0,20.0 L3.5,19.8 L2.1,16.4 L0.4,15.4 L-3.2,16.2 L-4.8,14.2 L-3.4,10.9 L-3.9,9.0 L-7.0,7.0 L-6.8,4.5 L-3.4,3.1 L-2.4,1.4 L-3.2,-2.2 L-1.2,-3.8 L2.1,-2.4 L4.0,-2.9 L6.0,-6.0 L8.5,-5.8 L9.9,-2.4 L11.6,-1.4 L15.2,-2.2 L16.8,-0.2 L15.4,3.1 L15.9,5.0 Z" fill="#333"/><circle cx="6" cy="7" r="5" fill="#fff"/></g>
<g transform="translate(1891,114)"><path d="M16.0,-5.0 L15.7,-1.9 L11.5,-0.2 L10.4,1.9 L11.3,6.3 L8.9,8.3 L4.8,6.5 L2.4,7.2 L0.0,11.0 L-3.1,10.7 L-4.8,6.5 L-6.9,5.4 L-11.3,6.3 L-13.3,3.9 L-11.5,-0.2 L-12.2,-2.6 L-16.0,-5.0 L-15.7,-8.1 L-11.5,-9.8 L-10.4,-11.9 L-11.3,-16.3 L-8.9,-18.3 L-4.8,-16.5 L-2.4,-17.2 L-0.0,-21.0 L3.1,-20.7 L4.8,-16.5 L6.9,-15.4 L11.3,-16.3 L13.3,-13.9 L11.5,-9.8 L12.2,-7.4 Z" fill="#333"/><circle cx="0" cy="-5" r="6" fill="#fff"/><rect x="-18" y="15" width="36" height="4" fill="#333"/><path d="M-15,15 Q-13,10 -11,15 M-6,15 Q-4,10 -2,15 M3,15 Q5,10 7,15 M12,15 Q14,10 16,15" fill="#333" stroke="#333" stroke-width="2"/></g>
<g transform="translate(1959,114)"><rect x="-17" y="-10" width="35" height="14" fill="none" stroke="#333" stroke-width="2.2"/><path d="M-13,-16 L-9,8 M-3,-16 L1,8 M7,-16 L11,8 M15,-16 L17,0" stroke="#333" stroke-width="3.8"/><path d="M-14,15 L10,15" stroke="#333" stroke-width="3.5"/><path d="M17.0,15.0 L8.0,21.8 L8.0,8.2 Z" fill="#333333"/></g>
<g transform="translate(2027,114)"><path d="M-5,-17.8 L9.5,-17.8 A4.5,7.7 0 0 1 9.5,-2.4 L-5,-2.4" fill="#fff" stroke="#888" stroke-width="2"/><ellipse cx="-5" cy="-10.1" rx="4.2" ry="7.7" fill="#fff" stroke="#888" stroke-width="2"/><path d="M5.5,2 L-13,2 A4.5,7.8 0 0 0 -13,17.6 L5.5,17.6" fill="#fff" stroke="#888" stroke-width="2"/><ellipse cx="5.5" cy="9.8" rx="4.2" ry="7.8" fill="#fff" stroke="#888" stroke-width="2"/><path d="M-12,-10 L-4.5,-10 M5.5,10 L11,10" stroke="#333" stroke-width="3.5"/><path d="M-18.0,-10.0 L-9.0,-16.8 L-9.0,-3.3 Z" fill="#333333"/><path d="M17.6,10.0 L8.6,16.8 L8.6,3.2 Z" fill="#333333"/></g>
<g transform="translate(2105,114)"><path d="M-16,13 L-16,-17 L11.5,-17 L11.5,-1" fill="none" stroke="#333" stroke-width="2.4"/><path d="M-16,13 L-7,13" stroke="#333" stroke-width="2.4"/><g fill="#333"><rect x="-11" y="-13" width="2.5" height="2.5"/><rect x="-7" y="-13" width="13" height="2.5"/><rect x="-11" y="-8" width="2.5" height="2.5"/><rect x="-7" y="-8" width="13" height="2.5"/><rect x="-11" y="-3" width="2.5" height="2.5"/><rect x="-7" y="-3" width="13" height="2.5"/></g><path d="M-9,10 Q2,-2 13,10 Q2,20 -9,10 Z" fill="#fff" stroke="#333" stroke-width="2.4"/><circle cx="2" cy="10" r="3.5" fill="#333"/><path d="M-6,18 L15,-3" stroke="#333" stroke-width="2.4"/></g>
<g transform="translate(2171,114)"><path d="M-9,-4 L-3,-4 L1,0 L1,18 L-14,18 L-18,14 L-18,-1" fill="#fff" stroke="#333" stroke-width="2.2"/><path d="M-14,18 L-14,2 L1,2" fill="none" stroke="#333" stroke-width="1.8"/><path d="M3,-17 L11,-17 L18,-12 L18,18 L3,18 Z" fill="#fff" stroke="#333" stroke-width="2.2"/><path d="M3,-17 L8,-12 L18,-12 M8,-12 L8,18" fill="none" stroke="#333" stroke-width="1.8"/><path d="M-10,-20 L-10,-4 M-18,-12 L-2,-12" stroke="#2b50ad" stroke-width="4"/><path d="M-3,-4 L4,3" stroke="#333" stroke-width="2"/></g>
<g transform="translate(117,199)"><path d="M-15,-15 L15,-15 L15,-12 L3,1 L3,15 L-3,10 L-3,1 L-15,-12 Z" fill="none" stroke="#333" stroke-width="2.4" stroke-linejoin="miter"/></g>
<g transform="translate(444,196)"><g fill="#333"><rect x="-14" y="-14" width="5" height="5"/><rect x="-7" y="-14" width="21" height="5"/><rect x="-14" y="-6.5" width="5" height="5"/><rect x="-7" y="-6.5" width="21" height="5"/><rect x="-14" y="1" width="5" height="5"/><rect x="-7" y="1" width="21" height="5"/><rect x="-14" y="9" width="5" height="5"/><rect x="-7" y="9" width="21" height="5"/></g></g>
<g transform="translate(450,258)"><path d="M-18,13 L-18,-13 L-8,-13 L-5,-9 L17,-9 L17,13 Z" fill="none" stroke="#9a9a9a" stroke-width="2.2"/><path d="M-2,-4 L-2,12 M-10,4 L6,4" stroke="#93acdc" stroke-width="3.5"/></g>
<g transform="translate(92,296)"><path d="M0,0 L23,0 L30,7 L30,29.7 L7,29.7 L0,23 Z" fill="#fff" stroke="#555" stroke-width="2"/><path d="M7,7 L30,7 M7,7 L7,29.7 M0,0 L7,7" stroke="#555" stroke-width="1.6"/><path d="M0,0 L17,0 L21,4 L21,21 L4,21 L0,17 Z" fill="#b9b9b9" stroke="#555" stroke-width="1.6"/><rect x="7" y="7" width="14" height="14" fill="#a2a2a2" stroke="#555" stroke-width="1.4"/></g>
<g transform="translate(280,308)"><rect x="-1.5" y="-16" width="3" height="8" fill="#333"/><path d="M-7,-10 L7,-10 L0,-2 Z" fill="#333"/><circle cx="0" cy="10" r="7.5" fill="none" stroke="#333" stroke-width="2.2"/><circle cx="0" cy="10" r="3.2" fill="#333"/></g>
<circle cx="147" cy="364" r="5.8" fill="none" stroke="#c8c8c8" stroke-width="1.6"/><circle cx="147" cy="364" r="2.6" fill="#c8c8c8"/>
<path d="M95,406 L105,416 L95,426" fill="none" stroke="#666" stroke-width="4" stroke-linecap="round" stroke-linejoin="round"/>
<g transform="translate(132,400)"><path d="M0.6,15.4 L14,15.4 L14,0 L23.8,0 L30,6.3 L30,29.7 L7.4,29.7 L0.6,23.4 Z" fill="#fff" stroke="#555" stroke-width="1.8" stroke-linejoin="round"/><path d="M0.6,15.4 L7.4,21 L20.2,21 L20.2,6.3 L30,6.3 M7.4,21 L7.4,29.7 M14,0 L20.2,6.3 M14,15.4 L20.2,21" fill="none" stroke="#555" stroke-width="1.35"/></g>
<path d="M90,464 L100,474 L110,464" fill="none" stroke="#666" stroke-width="4" stroke-linecap="round" stroke-linejoin="round"/>
<path d="M132,479 L132,455 L144,455 L148,460 L162,460 L162,479 Z" fill="#fff" stroke="#555" stroke-width="2"/>
<g transform="translate(170,504)"><path d="M0.6,15.4 L14,15.4 L14,0 L23.8,0 L30,6.3 L30,29.7 L7.4,29.7 L0.6,23.4 Z" fill="#fff" stroke="#555" stroke-width="1.8" stroke-linejoin="round"/><path d="M0.6,15.4 L7.4,21 L20.2,21 L20.2,6.3 L30,6.3 M7.4,21 L7.4,29.7 M14,0 L20.2,6.3 M14,15.4 L20.2,21" fill="none" stroke="#555" stroke-width="1.35"/></g>
<g transform="translate(170,556)"><path d="M0.6,15.4 L14,15.4 L14,0 L23.8,0 L30,6.3 L30,29.7 L7.4,29.7 L0.6,23.4 Z" fill="#fff" stroke="#555" stroke-width="1.8" stroke-linejoin="round"/><path d="M0.6,15.4 L7.4,21 L20.2,21 L20.2,6.3 L30,6.3 M7.4,21 L7.4,29.7 M14,0 L20.2,6.3 M14,15.4 L20.2,21" fill="none" stroke="#555" stroke-width="1.35"/></g>
<g transform="translate(170,608)"><path d="M0.6,15.4 L14,15.4 L14,0 L23.8,0 L30,6.3 L30,29.7 L7.4,29.7 L0.6,23.4 Z" fill="#fff" stroke="#555" stroke-width="1.8" stroke-linejoin="round"/><path d="M0.6,15.4 L7.4,21 L20.2,21 L20.2,6.3 L30,6.3 M7.4,21 L7.4,29.7 M14,0 L20.2,6.3 M14,15.4 L20.2,21" fill="none" stroke="#555" stroke-width="1.35"/></g>
<g transform="translate(170,660)"><path d="M0.6,15.4 L14,15.4 L14,0 L23.8,0 L30,6.3 L30,29.7 L7.4,29.7 L0.6,23.4 Z" fill="#fff" stroke="#555" stroke-width="1.8" stroke-linejoin="round"/><path d="M0.6,15.4 L7.4,21 L20.2,21 L20.2,6.3 L30,6.3 M7.4,21 L7.4,29.7 M14,0 L20.2,6.3 M14,15.4 L20.2,21" fill="none" stroke="#555" stroke-width="1.35"/></g>
<rect x="168" y="658" width="16.5" height="13.5" fill="#3e66c8"/><rect x="169.8" y="659.6" width="3.4" height="2.6" fill="#fff"/><rect x="174.8" y="659.6" width="3.4" height="2.6" fill="#fff"/><rect x="179.8" y="659.6" width="3.4" height="2.6" fill="#fff"/><rect x="169.8" y="663.6" width="3.4" height="2.6" fill="#fff"/><rect x="174.8" y="663.6" width="3.4" height="2.6" fill="#fff"/><rect x="179.8" y="663.6" width="3.4" height="2.6" fill="#fff"/><rect x="169.8" y="667.6" width="3.4" height="2.6" fill="#fff"/><rect x="174.8" y="667.6" width="3.4" height="2.6" fill="#fff"/><rect x="179.8" y="667.6" width="3.4" height="2.6" fill="#fff"/>
<path d="M320,656 L320,692" stroke="#333" stroke-width="3.2" stroke-dasharray="3.2 2.6"/><circle cx="320" cy="674" r="6" fill="#333"/>
<g transform="translate(170,712)"><path d="M0.6,15.4 L14,15.4 L14,0 L23.8,0 L30,6.3 L30,29.7 L7.4,29.7 L0.6,23.4 Z" fill="#fff" stroke="#555" stroke-width="1.8" stroke-linejoin="round"/><path d="M0.6,15.4 L7.4,21 L20.2,21 L20.2,6.3 L30,6.3 M7.4,21 L7.4,29.7 M14,0 L20.2,6.3 M14,15.4 L20.2,21" fill="none" stroke="#555" stroke-width="1.35"/></g>
<rect x="168" y="710" width="16.5" height="13.5" fill="#3e66c8"/><rect x="169.8" y="711.6" width="3.4" height="2.6" fill="#fff"/><rect x="174.8" y="711.6" width="3.4" height="2.6" fill="#fff"/><rect x="179.8" y="711.6" width="3.4" height="2.6" fill="#fff"/><rect x="169.8" y="715.6" width="3.4" height="2.6" fill="#fff"/><rect x="174.8" y="715.6" width="3.4" height="2.6" fill="#fff"/><rect x="179.8" y="715.6" width="3.4" height="2.6" fill="#fff"/><rect x="169.8" y="719.6" width="3.4" height="2.6" fill="#fff"/><rect x="174.8" y="719.6" width="3.4" height="2.6" fill="#fff"/><rect x="179.8" y="719.6" width="3.4" height="2.6" fill="#fff"/>
<path d="M320,708 L320,744" stroke="#333" stroke-width="3.2" stroke-dasharray="3.2 2.6"/><circle cx="320" cy="726" r="6" fill="#333"/>
<path d="M133,770 L143,780 L133,790" fill="none" stroke="#666" stroke-width="4" stroke-linecap="round" stroke-linejoin="round"/>
<g transform="translate(170,764)"><path d="M0.6,15.4 L14,15.4 L14,0 L23.8,0 L30,6.3 L30,29.7 L7.4,29.7 L0.6,23.4 Z" fill="#eef6fc" stroke="#555" stroke-width="1.8" stroke-linejoin="round"/><path d="M0.6,15.4 L7.4,21 L20.2,21 L20.2,6.3 L30,6.3 M7.4,21 L7.4,29.7 M14,0 L20.2,6.3 M14,15.4 L20.2,21" fill="none" stroke="#555" stroke-width="1.35"/></g>
<rect x="168" y="762" width="16.5" height="13.5" fill="#3e66c8"/><rect x="169.8" y="763.6" width="3.4" height="2.6" fill="#fff"/><rect x="174.8" y="763.6" width="3.4" height="2.6" fill="#fff"/><rect x="179.8" y="763.6" width="3.4" height="2.6" fill="#fff"/><rect x="169.8" y="767.6" width="3.4" height="2.6" fill="#fff"/><rect x="174.8" y="767.6" width="3.4" height="2.6" fill="#fff"/><rect x="179.8" y="767.6" width="3.4" height="2.6" fill="#fff"/><rect x="169.8" y="771.6" width="3.4" height="2.6" fill="#fff"/><rect x="174.8" y="771.6" width="3.4" height="2.6" fill="#fff"/><rect x="179.8" y="771.6" width="3.4" height="2.6" fill="#fff"/>
<path d="M320,760 L320,796" stroke="#333" stroke-width="3.2" stroke-dasharray="3.2 2.6"/><circle cx="320" cy="778" r="6" fill="#333"/>
<path d="M133,822 L143,832 L133,842" fill="none" stroke="#666" stroke-width="4" stroke-linecap="round" stroke-linejoin="round"/>
<g transform="translate(184,829) scale(0.95)"><path d="M-17.6,0 L-14,-3 L15,-3 L17.7,0 L17.7,17.4 L-14,17.4 L-17.6,14 Z" fill="#eef6fc" stroke="#555" stroke-width="1.8"/><path d="M-17.6,0 L14,0 L17.7,-3 M14,0 L14,17.4" fill="none" stroke="#555" stroke-width="1.4400000000000002"/><path d="M-13.6,-6 L-13.6,2 Q-7.6,5 -1.5,2 L-1.5,-6" fill="#eef6fc" stroke="#555" stroke-width="1.8"/><ellipse cx="-7.6" cy="-6" rx="6" ry="3" fill="#eef6fc" stroke="#555" stroke-width="1.8"/><path d="M2,-16 L2,-10 Q9,-7 15.7,-10 L15.7,-16" fill="#eef6fc" stroke="#555" stroke-width="1.8"/><ellipse cx="8.8" cy="-16" rx="6.8" ry="3.2" fill="#eef6fc" stroke="#555" stroke-width="1.8"/><path d="M8.8,-8 L8.8,-1" stroke="#555" stroke-width="1.4400000000000002"/><ellipse cx="9.5" cy="1.8" rx="6" ry="3" fill="#eef6fc" stroke="#555" stroke-width="1.62"/></g>
<path d="M95,874 L105,884 L95,894" fill="none" stroke="#666" stroke-width="4" stroke-linecap="round" stroke-linejoin="round"/>
<g transform="translate(132,868)"><path d="M0.6,15.4 L14,15.4 L14,0 L23.8,0 L30,6.3 L30,29.7 L7.4,29.7 L0.6,23.4 Z" fill="#fff" stroke="#555" stroke-width="1.8" stroke-linejoin="round"/><path d="M0.6,15.4 L7.4,21 L20.2,21 L20.2,6.3 L30,6.3 M7.4,21 L7.4,29.7 M14,0 L20.2,6.3 M14,15.4 L20.2,21" fill="none" stroke="#555" stroke-width="1.35"/></g>
<g transform="translate(280,882)"><path d="M0,2 L0,-10 M0,2 L-10,9 M0,2 L10,9" stroke="#333" stroke-width="3.2"/><path d="M0.0,-14.0 L5.2,-7.0 L-5.2,-7.0 Z" fill="#333333"/><path d="M-14.0,12.0 L-11.3,3.7 L-5.3,12.3 Z" fill="#333333"/><path d="M14.0,12.0 L5.3,12.3 L11.3,3.7 Z" fill="#333333"/></g>
<path d="M95,926 L105,936 L95,946" fill="none" stroke="#666" stroke-width="4" stroke-linecap="round" stroke-linejoin="round"/>
<g transform="translate(132,920)"><path d="M0.6,15.4 L14,15.4 L14,0 L23.8,0 L30,6.3 L30,29.7 L7.4,29.7 L0.6,23.4 Z" fill="#fff" stroke="#555" stroke-width="1.8" stroke-linejoin="round"/><path d="M0.6,15.4 L7.4,21 L20.2,21 L20.2,6.3 L30,6.3 M7.4,21 L7.4,29.7 M14,0 L20.2,6.3 M14,15.4 L20.2,21" fill="none" stroke="#555" stroke-width="1.35"/></g>
<g transform="translate(280,934)"><path d="M0,2 L0,-10 M0,2 L-10,9 M0,2 L10,9" stroke="#333" stroke-width="3.2"/><path d="M0.0,-14.0 L5.2,-7.0 L-5.2,-7.0 Z" fill="#333333"/><path d="M-14.0,12.0 L-11.3,3.7 L-5.3,12.3 Z" fill="#333333"/><path d="M14.0,12.0 L5.3,12.3 L11.3,3.7 Z" fill="#333333"/></g>
<g transform="translate(132,972)"><path d="M0.6,15.4 L14,15.4 L14,0 L23.8,0 L30,6.3 L30,29.7 L7.4,29.7 L0.6,23.4 Z" fill="#fff" stroke="#555" stroke-width="1.8" stroke-linejoin="round"/><path d="M0.6,15.4 L7.4,21 L20.2,21 L20.2,6.3 L30,6.3 M7.4,21 L7.4,29.7 M14,0 L20.2,6.3 M14,15.4 L20.2,21" fill="none" stroke="#555" stroke-width="1.35"/></g>
<g transform="translate(132,1024)"><path d="M0.6,15.4 L14,15.4 L14,0 L23.8,0 L30,6.3 L30,29.7 L7.4,29.7 L0.6,23.4 Z" fill="#fff" stroke="#555" stroke-width="1.8" stroke-linejoin="round"/><path d="M0.6,15.4 L7.4,21 L20.2,21 L20.2,6.3 L30,6.3 M7.4,21 L7.4,29.7 M14,0 L20.2,6.3 M14,15.4 L20.2,21" fill="none" stroke="#555" stroke-width="1.35"/></g>
<path d="M95,1082 L105,1092 L95,1102" fill="none" stroke="#666" stroke-width="4" stroke-linecap="round" stroke-linejoin="round"/>
<path d="M132,1103 L132,1079 L144,1079 L148,1084 L162,1084 L162,1103 Z" fill="#eef6fc" stroke="#555" stroke-width="2"/>
<path d="M90,1140 L100,1150 L110,1140" fill="none" stroke="#666" stroke-width="4" stroke-linecap="round" stroke-linejoin="round"/>
<g transform="translate(185,1196) scale(0.8)"><rect x="-16" y="-16" width="32" height="32" fill="none" stroke="#aaa" stroke-width="2" stroke-dasharray="4 3"/><rect x="-10" y="-9" width="11" height="11" fill="#fff" stroke="#aaa" stroke-width="2.2"/><rect x="-3" y="-2" width="11" height="11" fill="none" stroke="#aaa" stroke-width="2.2"/></g>
<path d="M133,1238 L143,1248 L133,1258" fill="none" stroke="#666" stroke-width="4" stroke-linecap="round" stroke-linejoin="round"/>
<g transform="translate(185,1247)"><path d="M0,16 L-9,2 A10,10 0 1 1 9,2 Z" fill="none" stroke="#b0b0b0" stroke-width="2"/><circle cx="0" cy="-4" r="4" fill="none" stroke="#b0b0b0" stroke-width="2"/><circle cx="0" cy="-4" r="1.8" fill="#b0b0b0"/></g>
<path d="M133,1290 L143,1300 L133,1310" fill="none" stroke="#666" stroke-width="4" stroke-linecap="round" stroke-linejoin="round"/>
<g transform="translate(185,1299)"><path d="M-12,-9 L-12,9 A12,5 0 0 0 12,9 L12,-9" fill="#fff" stroke="#bbb" stroke-width="2"/><ellipse cx="0" cy="-9" rx="12" ry="5" fill="#fff" stroke="#bbb" stroke-width="2"/><path d="M-12,-1 A12,5 0 0 0 12,-1 L12,9 A12,5 0 0 1 -12,9 Z" fill="#cfcfcf" stroke="#bbb" stroke-width="2"/><path d="M-6,3 L-6,8 Q0,10 6,8 L6,3" fill="#fff" stroke="#bbb" stroke-width="1.8"/></g>
<path d="M133,1342 L143,1352 L133,1362" fill="none" stroke="#666" stroke-width="4" stroke-linecap="round" stroke-linejoin="round"/>
<g transform="translate(185,1351)"><path d="M-12,-9 L-12,9 A12,5 0 0 0 12,9 L12,-9" fill="#fff" stroke="#bbb" stroke-width="2"/><ellipse cx="0" cy="-9" rx="12" ry="5" fill="#fff" stroke="#bbb" stroke-width="2"/><path d="M-12,-1 A12,5 0 0 0 12,-1 L12,9 A12,5 0 0 1 -12,9 Z" fill="#cfcfcf" stroke="#bbb" stroke-width="2"/><path d="M-6,3 L-6,8 Q0,10 6,8 L6,3" fill="#fff" stroke="#bbb" stroke-width="1.8"/></g>
<path d="M133,1394 L143,1404 L133,1414" fill="none" stroke="#666" stroke-width="4" stroke-linecap="round" stroke-linejoin="round"/>
<g transform="translate(185,1403)"><path d="M-12,-9 L-12,9 A12,5 0 0 0 12,9 L12,-9" fill="#fff" stroke="#bbb" stroke-width="2"/><ellipse cx="0" cy="-9" rx="12" ry="5" fill="#fff" stroke="#bbb" stroke-width="2"/><path d="M-12,-1 A12,5 0 0 0 12,-1 L12,9 A12,5 0 0 1 -12,9 Z" fill="#cfcfcf" stroke="#bbb" stroke-width="2"/><path d="M-6,3 L-6,8 Q0,10 6,8 L6,3" fill="#fff" stroke="#bbb" stroke-width="1.8"/></g>
<path d="M133,1446 L143,1456 L133,1466" fill="none" stroke="#666" stroke-width="4" stroke-linecap="round" stroke-linejoin="round"/>
<g transform="translate(185,1455)"><path d="M-12,-9 L-12,9 A12,5 0 0 0 12,9 L12,-9" fill="#fff" stroke="#bbb" stroke-width="2"/><ellipse cx="0" cy="-9" rx="12" ry="5" fill="#fff" stroke="#bbb" stroke-width="2"/><path d="M-12,-1 A12,5 0 0 0 12,-1 L12,9 A12,5 0 0 1 -12,9 Z" fill="#cfcfcf" stroke="#bbb" stroke-width="2"/><path d="M-6,3 L-6,8 Q0,10 6,8 L6,3" fill="#fff" stroke="#bbb" stroke-width="1.8"/></g>
<path d="M133,1498 L143,1508 L133,1518" fill="none" stroke="#666" stroke-width="4" stroke-linecap="round" stroke-linejoin="round"/>
<g transform="translate(185,1507)"><path d="M-12,-9 L-12,9 A12,5 0 0 0 12,9 L12,-9" fill="#fff" stroke="#bbb" stroke-width="2"/><ellipse cx="0" cy="-9" rx="12" ry="5" fill="#fff" stroke="#bbb" stroke-width="2"/><path d="M-12,-1 A12,5 0 0 0 12,-1 L12,9 A12,5 0 0 1 -12,9 Z" fill="#cfcfcf" stroke="#bbb" stroke-width="2"/><path d="M-6,3 L-6,8 Q0,10 6,8 L6,3" fill="#fff" stroke="#bbb" stroke-width="1.8"/></g>
<path d="M490,816 L555,816 L555,883 L490,883" fill="#fff" stroke="#b8b8b8" stroke-width="2"/>
<g transform="translate(524,851)"><path d="M-14,-17 L-10,-13 L-6,-17" fill="none" stroke="#333" stroke-width="2"/><path d="M-10,-13 L-10,16" stroke="#333" stroke-width="2"/><path d="M-4,-14 L15,-14 M-4,-7 L15,-7 M-4,1 L15,1 M-4,8 L15,8 M-4,15 L15,15" stroke="#333" stroke-width="2"/></g>
<g transform="translate(113,1614)"><path d="M-3,-15 L3,-15 L3,-3 L15,-3 L15,3 L3,3 L3,15 L-3,15 L-3,3 L-15,3 L-15,-3 L-3,-3 Z" fill="#6a6a6a"/></g>
<g transform="translate(184,1609)"><path d="M-18,0 L0,-18 L18,0 L18,19 L5,19 L5,7 L-5,7 L-5,19 L-18,19 Z" fill="#6a6a6a"/><rect x="8" y="-16" width="6" height="10" fill="#6a6a6a"/></g>
<g transform="translate(517,1593)"><path d="M0,0 L23,0 L30,7 L30,30 L7,30 L0,23 Z" fill="#fff" stroke="#333" stroke-width="2.2"/><path d="M7,7 L30,7 M7,7 L7,30 M0,0 L7,7" stroke="#333" stroke-width="1.8"/><path d="M0,0 L17,0 L21,4 L21,21 L4,21 L0,17 Z" fill="#a5a5a5" stroke="#333" stroke-width="1.6"/><rect x="7" y="7" width="14" height="14" fill="#8f8f8f" stroke="#555" stroke-width="1.2"/></g>
<g transform="translate(921,1593)"><path d="M0,0 L23,0 L30,7 L30,30 L7,30 L0,23 Z" fill="#fff" stroke="#333" stroke-width="2.2"/><path d="M7,7 L30,7 M7,7 L7,30 M0,0 L7,7" stroke="#333" stroke-width="1.8"/><path d="M0,0 L17,0 L21,4 L21,21 L4,21 L0,17 Z" fill="#a5a5a5" stroke="#333" stroke-width="1.6"/><rect x="7" y="7" width="14" height="14" fill="#8f8f8f" stroke="#555" stroke-width="1.2"/></g>
<g transform="translate(1326,1596)"><path d="M0,10 L4,7 L11,7 L14,10 L14,31 L4,31 L0,27 Z" fill="#fff" stroke="#333" stroke-width="2.2"/><path d="M4,10 L14,10 M4,10 L4,31 M0,10 L4,10" stroke="#333" stroke-width="1.6"/><path d="M14,0 L18,-3 L27,-3 L30,0 L30,31 L18,31 L14,27 Z" fill="#fff" stroke="#333" stroke-width="2.2"/><path d="M18,0 L30,0 M18,0 L18,31 M14,-3 L18,0" stroke="#333" stroke-width="1.6"/></g>
<g transform="translate(1730,1596)"><path d="M0,10 L4,7 L11,7 L14,10 L14,31 L4,31 L0,27 Z" fill="#fff" stroke="#333" stroke-width="2.2"/><path d="M4,10 L14,10 M4,10 L4,31 M0,10 L4,10" stroke="#333" stroke-width="1.6"/><path d="M14,0 L18,-3 L27,-3 L30,0 L30,31 L18,31 L14,27 Z" fill="#fff" stroke="#333" stroke-width="2.2"/><path d="M18,0 L30,0 M18,0 L18,31 M14,-3 L18,0" stroke="#333" stroke-width="1.6"/></g>
<g transform="translate(2995,674)"><rect x="-17" y="-17" width="34" height="34" rx="5" fill="none" stroke="#333" stroke-width="2.4"/><path d="M-9,-8 L10,-8 M-6,-3 L12,-3 M-6,2 L12,2 M-6,7 L12,7" stroke="#333" stroke-width="3.2"/><path d="M-6,-8 L-6,9" stroke="#333" stroke-width="2"/></g>
<g transform="translate(2995,740)"><path d="M-3,-6 L12,-10 L17,-4 L17,12 L2,17 L-3,12 Z" fill="#fff" stroke="#333" stroke-width="2.2"/><path d="M-3,-6 L2,0 L17,-4 M2,0 L2,17" fill="none" stroke="#333" stroke-width="2"/></g>
<rect x="2973" y="723" width="16.5" height="13.5" fill="#3e66c8"/><rect x="2974.8" y="724.6" width="3.4" height="2.6" fill="#fff"/><rect x="2979.8" y="724.6" width="3.4" height="2.6" fill="#fff"/><rect x="2984.8" y="724.6" width="3.4" height="2.6" fill="#fff"/><rect x="2974.8" y="728.6" width="3.4" height="2.6" fill="#fff"/><rect x="2979.8" y="728.6" width="3.4" height="2.6" fill="#fff"/><rect x="2984.8" y="728.6" width="3.4" height="2.6" fill="#fff"/><rect x="2974.8" y="732.6" width="3.4" height="2.6" fill="#fff"/><rect x="2979.8" y="732.6" width="3.4" height="2.6" fill="#fff"/><rect x="2984.8" y="732.6" width="3.4" height="2.6" fill="#fff"/>
<g transform="translate(2995,806)"><rect x="-19" y="-16" width="8" height="10" fill="#ccc" stroke="#555" stroke-width="1.5"/><path d="M-14,-3 L-14,2 L-1,2 L-1,6" fill="none" stroke="#3b5fc0" stroke-width="2" stroke-dasharray="3 2"/><g transform="translate(-7,-6) scale(0.75)"><path d="M0.6,15.4 L14,15.4 L14,0 L23.8,0 L30,6.3 L30,29.7 L7.4,29.7 L0.6,23.4 Z" fill="#fff" stroke="#333" stroke-width="2.4" stroke-linejoin="round"/><path d="M0.6,15.4 L7.4,21 L20.2,21 L20.2,6.3 L30,6.3 M7.4,21 L7.4,29.7 M14,0 L20.2,6.3 M14,15.4 L20.2,21" fill="none" stroke="#333" stroke-width="1.7999999999999998"/></g></g>
<g transform="translate(2995,872)"><rect x="-19" y="4" width="30" height="12" fill="#fff" stroke="#333" stroke-width="2"/><rect x="2" y="-16" width="13" height="30" rx="0" fill="none" stroke="#3b5fc0" stroke-width="2" stroke-dasharray="3 2"/><circle cx="9" cy="10" r="6" fill="#fff" stroke="#3b5fc0" stroke-width="2"/><circle cx="9" cy="10" r="3" fill="none" stroke="#333" stroke-width="2"/></g>
<g transform="translate(2995,938)"><g fill="#666"><rect x="-17" y="-17" width="16" height="6"/></g><g fill="#333"><rect x="-17" y="-10" width="16" height="3"/><rect x="-17" y="-5" width="16" height="3"/></g><path d="M-13,-17 L-13,-2 M-8,-17 L-8,-2" stroke="#fff" stroke-width="1"/><path d="M-14,-12 Q-21,3 -14,17 M14,-12 Q21,3 14,17" fill="none" stroke="#333" stroke-width="3"/><path d="M-8,-2 Q0,-8 6,8 Q8,14 12,12 M10,-6 Q0,0 -8,13" fill="none" stroke="#333" stroke-width="4"/></g>
<g transform="translate(2995,1025)"><rect x="-20" y="-20" width="40" height="40" rx="7" fill="#d9d9d9"/><rect x="-15" y="-15" width="31" height="31" rx="2" fill="#2c5fd6" stroke="#222" stroke-width="1.5"/><path d="M0,-9 Q-6,-12 -12,-10 L-12,9 Q-6,7 0,10 Q6,7 12,9 L12,-10 Q6,-12 0,-9 Z M0,-9 L0,10" fill="#fff" stroke="#222" stroke-width="1.5"/></g>
<g transform="translate(2844,1555)"><ellipse cx="5" cy="-4" rx="10" ry="8" fill="none" stroke="#333" stroke-width="2.6"/><ellipse cx="5" cy="-5" rx="5" ry="3" fill="none" stroke="#333" stroke-width="2"/><path d="M-15,3 L5,3 Q15,3 15,-3 L15,4 Q15,12 5,12 L-15,12 Z" fill="#fff" stroke="#333" stroke-width="2.4"/><path d="M-11,12 L-11,9 M-6,12 L-6,8 M-1,12 L-1,9 M4,12 L4,8 M9,12 L9,9" stroke="#555" stroke-width="1.2"/></g>
<g transform="translate(2914,1555)"><path d="M-19,13 Q-19,-13 0,-13 Q19,-13 19,13 Z" fill="none" stroke="#333" stroke-width="2.6"/><path d="M-12,10 Q-12,-6 0,-6 Q12,-6 12,10 L4,10 Q4,4 0,4 Q-4,4 -4,10 Z" fill="none" stroke="#333" stroke-width="2.4"/><path d="M-17,5 L-14,5 M-15,-3 L-12,-2 M-10,-9 L-8,-7 M-3,-12 L-2,-9 M4,-12 L3,-9 M10,-9 L8,-7 M15,-3 L12,-2 M17,5 L14,5" stroke="#333" stroke-width="1.4"/></g>
<g transform="translate(2984,1555)"><path d="M-10,-12 L10,-12 M0,-12 L0,14" stroke="#333" stroke-width="2.6"/><path d="M-10,-12 L-14,3 L-6,3 Z M10,-12 L6,3 L14,3 Z" fill="none" stroke="#333" stroke-width="2"/><rect x="-14" y="3" width="10" height="4" fill="#333"/><rect x="4" y="3" width="10" height="4" fill="#333"/><rect x="-14" y="12" width="28" height="4" fill="#333"/></g>
<path d="M1810,312 Q1818,312 1823,318 L2154,655 Q2188,692 2190,735 L2190,972 Q2190,980 2182,987 L2075,1078 Q2068,1084 2058,1082 L1470,916 Q1460,912 1456,902 L1392,757 Q1372,745 1364,712 Q1360,680 1366,652 Q1370,638 1380,626 L1465,549 L1603,431 L1705,348 Q1755,318 1810,312 Z" fill="#2e2f31" stroke="#161616" stroke-width="3"/>
<g clip-path="url(#silclip)">
<path d="M1590,420 L1727,420 L1732,428 L2078,775 L2078,1066 L1580,930 L1466,898 L1400,752 L1375,720 L1371,660 L1385,630 Z" fill="#27282a"/>
<path d="M1700,402 L1668,446 Q1652,470 1652,503 Q1648,540 1650,585 Q1655,630 1668,667 Q1690,720 1734,748 Q1770,790 1800,814 Q1900,880 2078,925 L2078,1090 L1400,920 L1330,740 L1340,600 L1600,380 Z" fill="#242b26"/>
<path d="M1711,405 Q1640,420 1612,434 Q1570,460 1553,487 Q1528,540 1524,602 Q1524,660 1537,700 Q1555,770 1576,814 Q1600,870 1640,890 L1668,880 Q1630,840 1603,781 Q1580,730 1563,684 Q1550,640 1553,618 Q1553,570 1563,540 Q1575,505 1589,487 Q1625,455 1668,446 Q1690,430 1711,405 Z" fill="#273029"/>
<path d="M1711,405 Q1640,420 1612,434 Q1570,460 1553,487 Q1528,540 1524,602 Q1524,660 1537,700 Q1555,770 1576,814 Q1600,870 1640,890 L1600,940 L1400,920 L1330,740 L1340,600 L1600,380 Z" fill="#262e29"/>
<path d="M1917,999 L2030,1030 Q2060,1040 2065,1060 L2062,1076 L1901,1030 Z" fill="#2c2d2f"/>
</g>
<path d="M1823,318 L2154,655 Q2188,692 2190,735 L2190,972" fill="none" stroke="#3a3b3e" stroke-width="10" transform="translate(-6,4)" opacity="0.9"/>
<path d="M1466,908 L2060,1075" fill="none" stroke="#393a3d" stroke-width="11"/>
<path d="M1398,752 L1460,895" fill="none" stroke="#38393c" stroke-width="10"/>
<g clip-path="url(#silclip)"><path d="M1370,640 L1380,630 L1612,430" fill="none" stroke="#36373a" stroke-width="20"/></g>
<path d="M1810,312 Q1818,312 1823,318 L2154,655 Q2188,692 2190,735 L2190,972 Q2190,980 2182,987 L2075,1078 Q2068,1084 2058,1082 L1470,916 Q1460,912 1456,902 L1392,757 Q1372,745 1364,712 Q1360,680 1366,652 Q1370,638 1380,626 L1465,549 L1603,431 L1705,348 Q1755,318 1810,312 Z" fill="none" stroke="#141414" stroke-width="3"/>
<path d="M1820,337 L2150,672 Q2180,705 2181,740 L2181,975" fill="none" stroke="#121212" stroke-width="1.8"/>
<path d="M1470,903 L2054,1068" fill="none" stroke="#121212" stroke-width="1.8"/>
<path d="M1388,638 L1611,444" fill="none" stroke="#121212" stroke-width="1.8"/>
<path d="M1398,754 L1461,899" fill="none" stroke="#121212" stroke-width="1.8"/>
<path d="M1727,424 L2078,778" fill="none" stroke="#121212" stroke-width="2.2"/>
<path d="M1744,422 L2090,772" fill="none" stroke="#121212" stroke-width="1.5"/>
<path d="M2078,775 L2078,1068" fill="none" stroke="#121212" stroke-width="2"/>
<path d="M2088,770 L2088,1060" fill="none" stroke="#1b1b1b" stroke-width="1.2"/>
<path d="M1711,405 Q1640,420 1612,434 Q1570,460 1553,487 Q1528,540 1524,602 Q1524,660 1537,700 Q1555,770 1576,814 Q1600,870 1640,890" fill="none" stroke="#121212" stroke-width="2"/>
<path d="M1668,446 Q1625,455 1589,487 Q1575,505 1563,540 Q1553,570 1553,618 Q1550,640 1563,684 Q1580,730 1603,781 Q1630,840 1668,880 Q1720,928 1800,936 L2075,1013" fill="none" stroke="#121212" stroke-width="1.8"/>
<path d="M1668,448 Q1652,470 1652,503 Q1648,540 1650,585 Q1655,630 1668,667 Q1690,720 1734,748 Q1770,790 1800,814 Q1900,880 2075,920" fill="none" stroke="#121212" stroke-width="1.4"/>
<path d="M1883,860 L1800,935" fill="none" stroke="#121212" stroke-width="1.2"/>
<path d="M1603,434 Q1650,388 1705,350 Q1755,320 1800,316 L1708,404 Q1670,412 1640,420 Z" fill="#4b8040" stroke="#111" stroke-width="1.8"/>
<path d="M1708,404 L1801,322 Q1812,318 1819,326 Q1823,334 1820,340 L1729,422 Q1716,422 1708,404 Z" fill="#63a758" stroke="#111" stroke-width="1.8"/>
<path d="M1716,408 L1806,327" stroke="#6fb863" stroke-width="4"/>
<ellipse cx="1702" cy="421" rx="6" ry="7" fill="#4a4f4b" stroke="#111" stroke-width="1.5"/><ellipse cx="1708" cy="417" rx="6" ry="7" fill="none" stroke="#111" stroke-width="1.3"/>
<ellipse cx="1527" cy="618" rx="6" ry="7" fill="#4a4f4b" stroke="#111" stroke-width="1.5"/><ellipse cx="1532" cy="614" rx="6" ry="7" fill="none" stroke="#111" stroke-width="1.3"/>
<path d="M2087,909 L2171,932 Q2180,938 2181,950 L2181,982 L2087,1067 Z" fill="#5a9a4f" stroke="#111" stroke-width="1.8"/>
<path d="M2171,932 Q2180,938 2181,950 L2087,1021 L2087,1005 Z" fill="#6db360" stroke="#111" stroke-width="1.3"/>
<path d="M2087,1021 L2181,950 L2181,982 L2087,1067 Z" fill="#538f49"/>
<path d="M2087,1021 L2181,950" fill="none" stroke="#121212" stroke-width="1.3"/>
<path d="M1625,916 L1901,994 L1917,999 L1917,1013 L1901,1025 L1625,942 Z" fill="#1e1f21" stroke="#111" stroke-width="1.8"/>
<path d="M1628,920 L1900,998" fill="none" stroke="#333" stroke-width="1.2"/>
<circle cx="1660" cy="940" r="5.5" fill="#555" stroke="#111" stroke-width="1.4"/><circle cx="1664" cy="937" r="5.5" fill="none" stroke="#111" stroke-width="1.2"/>
<circle cx="1691" cy="949" r="4.5" fill="none" stroke="#0e0e0e" stroke-width="1.4"/>
<circle cx="1723" cy="958" r="4.5" fill="none" stroke="#0e0e0e" stroke-width="1.4"/>
<circle cx="1754" cy="967" r="5.5" fill="#555" stroke="#111" stroke-width="1.4"/><circle cx="1758" cy="964" r="5.5" fill="none" stroke="#111" stroke-width="1.2"/>
<circle cx="1786" cy="976" r="4.5" fill="none" stroke="#0e0e0e" stroke-width="1.4"/>
<circle cx="1817" cy="985" r="4.5" fill="none" stroke="#0e0e0e" stroke-width="1.4"/>
<circle cx="1849" cy="994" r="4.5" fill="none" stroke="#0e0e0e" stroke-width="1.4"/>
<circle cx="1880" cy="1003" r="5.5" fill="#555" stroke="#111" stroke-width="1.4"/><circle cx="1884" cy="1000" r="5.5" fill="none" stroke="#111" stroke-width="1.2"/>
<circle cx="1700" cy="912" r="6" fill="#4a4f4b" stroke="#111" stroke-width="1.4"/><circle cx="1705" cy="908" r="6" fill="none" stroke="#111" stroke-width="1.2"/>
<circle cx="2063" cy="1071" r="5" fill="#4a4f4b" stroke="#111" stroke-width="1.3"/><circle cx="2068" cy="1067" r="5" fill="none" stroke="#111" stroke-width="1.2"/>
<path d="M1917,1000 L2030,1030 Q2060,1040 2065,1065" fill="none" stroke="#121212" stroke-width="1.4"/>
<path d="M1392,655.5 L1788,655.5 C1838,657 1840,767 1788,769 L1392,769 C1350,766 1350,658 1392,655.5 Z M1398,677 L1785,677 C1814,679 1814,745 1785,747 L1398,747 C1376,745 1376,679 1398,677 Z" fill="#1c1c1c" fill-rule="evenodd"/>
<path d="M1392,655.5 L1788,655.5 L1787,667 L1395,667 Z" fill="#2b2b2c"/>
<path d="M1398,747 L1785,747 L1787,758.5 L1395,758.5 Z" fill="#2b2b2c"/>
<path d="M1392,655.5 L1788,655.5 C1838,657 1840,767 1788,769 L1392,769 C1350,766 1350,658 1392,655.5 Z" fill="none" stroke="#0b0b0b" stroke-width="2.4"/>
<path d="M1398,677 L1785,677 C1814,679 1814,745 1785,747 L1398,747 C1376,745 1376,679 1398,677 Z" fill="none" stroke="#0b0b0b" stroke-width="2.2"/>
<path d="M1395,667 L1787,667 C1826,668 1826,757 1787,758.5 L1395,758.5 C1363,757 1363,668 1395,667 Z" fill="none" stroke="#0b0b0b" stroke-width="1.6"/>
<path d="M1475,819.5 L1957,737 C2040,724 2064,790 2059,830 C2056,872 2036,887 1995,892 L1497,905.6 C1452,906 1436,838 1475,819.5 Z M1480,832 L1955,750 C2022,741 2044,800 2040,830 C2036,860 2020,874 1993,877 L1497,885.6 C1467,886 1458,846 1480,832 Z" fill="#1c1c1c" fill-rule="evenodd"/>
<path d="M1475,819.5 L1957,737 L1956,743.5 L1477,825.5 Z" fill="#2b2b2c"/>
<path d="M1497,885.6 L1993,877 L1994,884.5 L1497,894 Z" fill="#2b2b2c"/>
<path d="M1475,819.5 L1957,737 C2040,724 2064,790 2059,830 C2056,872 2036,887 1995,892 L1497,905.6 C1452,906 1436,838 1475,819.5 Z" fill="none" stroke="#0b0b0b" stroke-width="2.4"/>
<path d="M1480,832 L1955,750 C2022,741 2044,800 2040,830 C2036,860 2020,874 1993,877 L1497,885.6 C1467,886 1458,846 1480,832 Z" fill="none" stroke="#0b0b0b" stroke-width="2.2"/>
<path d="M1477,825.5 L1956,743.5 C2030,732 2054,795 2050,830 C2046,866 2028,881 1994,884.5 L1497,894 C1460,895 1447,842 1477,825.5 Z" fill="none" stroke="#0b0b0b" stroke-width="1.6"/>
<g clip-path="url(#motclip)">
<path d="M1504,544 Q1560,548 1585,600 Q1598,640 1580,680 Q1565,700 1540,711 Q1560,698 1590,701 Q1630,712 1652,748 Q1668,790 1649,837 Q1628,875 1603,886 Q1575,905 1553,911 L1508,913 L1502,926 L1490,922 L1480,916 L1470,906 L1461,894 Q1452,870 1449,851 Q1440,830 1441,816 Q1443,790 1483,758 L1430,754 L1415,757 L1389,736 Q1372,710 1371,682 Q1368,652 1379,622 Z" fill="#9d8047"/>
<ellipse cx="1450" cy="690" rx="68" ry="62" fill="#b08c4a" opacity="0.7"/>
<ellipse cx="1522" cy="852" rx="68" ry="62" fill="#b08c4a" opacity="0.7"/>
<ellipse cx="1450" cy="690" rx="58" ry="55" fill="none" stroke="#8a6d3a" stroke-width="1.5"/>
<ellipse cx="1445" cy="693" rx="30" ry="28" fill="#c59a4d" stroke="#8a6d3a" stroke-width="1.5"/>
<ellipse cx="1445" cy="693" rx="16" ry="15" fill="#c9a050" stroke="#8a6d3a" stroke-width="1.2"/>
<circle cx="1410" cy="655" r="4" fill="none" stroke="#8a6d3a" stroke-width="1.2"/>
<circle cx="1495" cy="700" r="4" fill="none" stroke="#8a6d3a" stroke-width="1.2"/>
<circle cx="1442" cy="738" r="4" fill="none" stroke="#8a6d3a" stroke-width="1.2"/>
<circle cx="1470" cy="650" r="4" fill="none" stroke="#8a6d3a" stroke-width="1.2"/>
<circle cx="1428" cy="652" r="5" fill="none" stroke="#8a6d3a" stroke-width="1.2"/><circle cx="1434" cy="648" r="5" fill="none" stroke="#8a6d3a" stroke-width="1.2"/>
<ellipse cx="1522" cy="852" rx="58" ry="55" fill="none" stroke="#8a6d3a" stroke-width="1.5"/>
<ellipse cx="1517" cy="855" rx="30" ry="28" fill="#c59a4d" stroke="#8a6d3a" stroke-width="1.5"/>
<ellipse cx="1517" cy="855" rx="16" ry="15" fill="#c9a050" stroke="#8a6d3a" stroke-width="1.2"/>
<circle cx="1482" cy="817" r="4" fill="none" stroke="#8a6d3a" stroke-width="1.2"/>
<circle cx="1567" cy="862" r="4" fill="none" stroke="#8a6d3a" stroke-width="1.2"/>
<circle cx="1514" cy="900" r="4" fill="none" stroke="#8a6d3a" stroke-width="1.2"/>
<circle cx="1542" cy="812" r="4" fill="none" stroke="#8a6d3a" stroke-width="1.2"/>
<circle cx="1500" cy="814" r="5" fill="none" stroke="#8a6d3a" stroke-width="1.2"/><circle cx="1506" cy="810" r="5" fill="none" stroke="#8a6d3a" stroke-width="1.2"/>
<path d="M1392,655.5 L1788,655.5 C1838,657 1840,767 1788,769 L1392,769 C1350,766 1350,658 1392,655.5 Z M1398,677 L1785,677 C1814,679 1814,745 1785,747 L1398,747 C1376,745 1376,679 1398,677 Z" fill="#1c1c1c" fill-rule="evenodd"/>
<path d="M1392,655.5 L1788,655.5 L1787,667 L1395,667 Z" fill="#2b2b2c"/>
<path d="M1398,747 L1785,747 L1787,758.5 L1395,758.5 Z" fill="#2b2b2c"/>
<path d="M1392,655.5 L1788,655.5 C1838,657 1840,767 1788,769 L1392,769 C1350,766 1350,658 1392,655.5 Z" fill="none" stroke="#0b0b0b" stroke-width="2.4"/>
<path d="M1398,677 L1785,677 C1814,679 1814,745 1785,747 L1398,747 C1376,745 1376,679 1398,677 Z" fill="none" stroke="#0b0b0b" stroke-width="2.2"/>
<path d="M1395,667 L1787,667 C1826,668 1826,757 1787,758.5 L1395,758.5 C1363,757 1363,668 1395,667 Z" fill="none" stroke="#0b0b0b" stroke-width="1.6"/>
<path d="M1475,819.5 L1957,737 C2040,724 2064,790 2059,830 C2056,872 2036,887 1995,892 L1497,905.6 C1452,906 1436,838 1475,819.5 Z M1480,832 L1955,750 C2022,741 2044,800 2040,830 C2036,860 2020,874 1993,877 L1497,885.6 C1467,886 1458,846 1480,832 Z" fill="#1c1c1c" fill-rule="evenodd"/>
<path d="M1475,819.5 L1957,737 L1956,743.5 L1477,825.5 Z" fill="#2b2b2c"/>
<path d="M1497,885.6 L1993,877 L1994,884.5 L1497,894 Z" fill="#2b2b2c"/>
<path d="M1475,819.5 L1957,737 C2040,724 2064,790 2059,830 C2056,872 2036,887 1995,892 L1497,905.6 C1452,906 1436,838 1475,819.5 Z" fill="none" stroke="#0b0b0b" stroke-width="2.4"/>
<path d="M1480,832 L1955,750 C2022,741 2044,800 2040,830 C2036,860 2020,874 1993,877 L1497,885.6 C1467,886 1458,846 1480,832 Z" fill="none" stroke="#0b0b0b" stroke-width="2.2"/>
<path d="M1477,825.5 L1956,743.5 C2030,732 2054,795 2050,830 C2046,866 2028,881 1994,884.5 L1497,894 C1460,895 1447,842 1477,825.5 Z" fill="none" stroke="#0b0b0b" stroke-width="1.6"/>
</g>
<path d="M1443,688 L1396,726" stroke="#c99a3f" stroke-width="18" stroke-linecap="round"/>
<path d="M1443,688 L1396,726" stroke="#eab64e" stroke-width="13" stroke-linecap="round"/>
<circle cx="1396" cy="726" r="8" fill="#e0ad48" stroke="#a57d36" stroke-width="1.4"/><circle cx="1396" cy="726" r="4.0" fill="none" stroke="#a57d36" stroke-width="1.2"/>
<path d="M1517,851 L1464,884" stroke="#c99a3f" stroke-width="18" stroke-linecap="round"/>
<path d="M1517,851 L1464,884" stroke="#eab64e" stroke-width="13" stroke-linecap="round"/>
<circle cx="1464" cy="884" r="8" fill="#e0ad48" stroke="#a57d36" stroke-width="1.4"/><circle cx="1464" cy="884" r="4.0" fill="none" stroke="#a57d36" stroke-width="1.2"/>
<path d="M1504,544 Q1560,548 1585,600 Q1598,640 1580,680 Q1565,700 1540,711 Q1560,698 1590,701 Q1630,712 1652,748 Q1668,790 1649,837 Q1628,875 1603,886 Q1575,905 1553,911 L1508,913 L1502,926 L1490,922 L1480,916 L1470,906 L1461,894 Q1452,870 1449,851 Q1440,830 1441,816 Q1443,790 1483,758 L1430,754 L1415,757 L1389,736 Q1372,710 1371,682 Q1368,652 1379,622 Z" fill="none" stroke="#f3c46b" stroke-width="2.6" stroke-linejoin="round"/>
<path d="M1900,602 L1958,560" stroke="#0b0b0b" stroke-width="23"/><path d="M1900,602 L1958,560" stroke="#202021" stroke-width="17"/><path d="M1900,602 L1958,560" stroke="#101010" stroke-width="1.5" transform="translate(3,3)"/>
<path d="M1930,556 L1948,548 L1962,560 L1958,578 L1940,582 Z" fill="#1a1a1a" stroke="#0a0a0a" stroke-width="1.5"/>
<ellipse cx="1902.5" cy="600" rx="42" ry="43.5" fill="#a0844a"/><ellipse cx="1904.6" cy="600.6" rx="35.7" ry="37.0" fill="none" stroke="#c5a262" stroke-width="1.3"/><ellipse cx="1906.7" cy="601.2" rx="29.4" ry="30.4" fill="none" stroke="#c5a262" stroke-width="1.3"/><ellipse cx="1908.8" cy="601.8" rx="23.1" ry="23.9" fill="none" stroke="#c5a262" stroke-width="1.3"/><ellipse cx="1910.9" cy="602.4" rx="16.8" ry="17.4" fill="none" stroke="#c5a262" stroke-width="1.3"/>
<ellipse cx="1790.5" cy="697" rx="42" ry="43.5" fill="#a0844a"/><ellipse cx="1792.6" cy="697.6" rx="35.7" ry="37.0" fill="none" stroke="#c5a262" stroke-width="1.3"/><ellipse cx="1794.7" cy="698.2" rx="29.4" ry="30.4" fill="none" stroke="#c5a262" stroke-width="1.3"/><ellipse cx="1796.8" cy="698.8" rx="23.1" ry="23.9" fill="none" stroke="#c5a262" stroke-width="1.3"/><ellipse cx="1798.9" cy="699.4" rx="16.8" ry="17.4" fill="none" stroke="#c5a262" stroke-width="1.3"/>
<ellipse cx="2000" cy="803" rx="42" ry="43.5" fill="#a0844a"/><ellipse cx="2002.1" cy="803.6" rx="35.7" ry="37.0" fill="none" stroke="#c5a262" stroke-width="1.3"/><ellipse cx="2004.2" cy="804.2" rx="29.4" ry="30.4" fill="none" stroke="#c5a262" stroke-width="1.3"/><ellipse cx="2006.3" cy="804.8" rx="23.1" ry="23.9" fill="none" stroke="#c5a262" stroke-width="1.3"/><ellipse cx="2008.4" cy="805.4" rx="16.8" ry="17.4" fill="none" stroke="#c5a262" stroke-width="1.3"/>
<ellipse cx="2111" cy="707" rx="42" ry="43.5" fill="#a0844a"/><ellipse cx="2113.1" cy="707.6" rx="35.7" ry="37.0" fill="none" stroke="#c5a262" stroke-width="1.3"/><ellipse cx="2115.2" cy="708.2" rx="29.4" ry="30.4" fill="none" stroke="#c5a262" stroke-width="1.3"/><ellipse cx="2117.3" cy="708.8" rx="23.1" ry="23.9" fill="none" stroke="#c5a262" stroke-width="1.3"/><ellipse cx="2119.4" cy="709.4" rx="16.8" ry="17.4" fill="none" stroke="#c5a262" stroke-width="1.3"/>
<ellipse cx="1794.5" cy="696" rx="31" ry="34" fill="none" stroke="#0b0b0b" stroke-width="16"/><ellipse cx="1794.5" cy="696" rx="31" ry="34" fill="none" stroke="#262627" stroke-width="12"/>
<ellipse cx="2004" cy="802" rx="31" ry="34" fill="none" stroke="#0b0b0b" stroke-width="16"/><ellipse cx="2004" cy="802" rx="31" ry="34" fill="none" stroke="#262627" stroke-width="12"/>
<path d="M1770,722 L1900,604" stroke="#0b0b0b" stroke-width="23"/><path d="M1770,722 L1900,604" stroke="#202021" stroke-width="17"/><path d="M1770,722 L1900,604" stroke="#101010" stroke-width="1.5" transform="translate(3,3)"/>
<path d="M1985,828 L2112,710" stroke="#0b0b0b" stroke-width="23"/><path d="M1985,828 L2112,710" stroke="#202021" stroke-width="17"/><path d="M1985,828 L2112,710" stroke="#101010" stroke-width="1.5" transform="translate(3,3)"/>
<path d="M1776.5,723.5 L1765.9,733.0 L1751.4,729.5 L1747.5,716.5 L1758.1,707.0 L1772.6,710.5 Z" fill="#1d1d1e" stroke="#0a0a0a" stroke-width="1.8"/>
<path d="M1986.5,829.5 L1975.9,839.0 L1961.4,835.5 L1957.5,822.5 L1968.1,813.0 L1982.6,816.5 Z" fill="#1d1d1e" stroke="#0a0a0a" stroke-width="1.8"/>
<ellipse cx="1902.5" cy="600" rx="42" ry="43.5" fill="none" stroke="#f3c46b" stroke-width="2.6"/>
<ellipse cx="1790.5" cy="697" rx="42" ry="43.5" fill="none" stroke="#f3c46b" stroke-width="2.6"/>
<ellipse cx="2000" cy="803" rx="42" ry="43.5" fill="none" stroke="#f3c46b" stroke-width="2.6"/>
<ellipse cx="2111" cy="707" rx="42" ry="43.5" fill="none" stroke="#f3c46b" stroke-width="2.6"/>
<path d="M1889.1,593.0 Q1902.6,587.0 1912.1,611.0 Q1898.6,617.0 1889.1,593.0 Z" fill="#1e1e1e" stroke="#f3c46b" stroke-width="2"/>
<path d="M1780.5,687.0 Q1794,681.0 1803.5,705.0 Q1790,711.0 1780.5,687.0 Z" fill="#1e1e1e" stroke="#f3c46b" stroke-width="2"/>
<path d="M1993.5,796.0 Q2007,790.0 2016.5,814.0 Q2003,820.0 1993.5,796.0 Z" fill="#1e1e1e" stroke="#f3c46b" stroke-width="2"/>
<path d="M2102.5,699.0 Q2116,693.0 2125.5,717.0 Q2112,723.0 2102.5,699.0 Z" fill="#1e1e1e" stroke="#f3c46b" stroke-width="2"/>
<path d="M1820,1212 L1942.5,1247 L1942.5,1370 L1871.7,1431 L1750,1396 L1750,1273.5 Z" fill="#b6b6b6"/>
<path d="M1820,1293 L1871.7,1307.6 L1871.7,1349.5 L1820,1334.7 Z" fill="#a8a8a8"/>
<g fill="none" stroke="#111" stroke-width="2.6" stroke-linejoin="round"><path d="M1820,1212 L1942.5,1247 L1942.5,1370 L1871.7,1431 L1750,1396 L1750,1273.5 Z"/><path d="M1750,1273.5 L1871.7,1307.6 L1942.5,1247 M1871.7,1307.6 L1871.7,1431"/><path d="M1820,1212 L1820,1335 L1750,1396 M1820,1335 L1942.5,1370"/></g>
<path d="M2828.6,198.7 L2843.6,180 L2858.6,198.7 Z" fill="#e1e7ee"/>
<path d="M2828.6,459.8 L2858.6,459.8 L2843.6,479.8 Z" fill="#e1e7ee"/>
<path d="M2713.7,315 L2693.7,330 L2713.7,345 Z" fill="#e1e7ee"/>
<path d="M2973.5,315 L2993.5,330 L2973.5,345 Z" fill="#e1e7ee"/>
<path d="M2801,204 Q2760,218 2745,238" fill="none" stroke="#e1e7ee" stroke-width="11"/><path d="M2737,247 L2736,228 L2758,240 Z" fill="#e1e7ee" stroke="#e1e7ee" stroke-width="4"/>
<path d="M2886,204 Q2927,218 2942,238" fill="none" stroke="#e1e7ee" stroke-width="11"/><path d="M2951,247 L2952,228 L2930,240 Z" fill="#e1e7ee" stroke="#e1e7ee" stroke-width="4"/>
<path d="M2840,246 Q2845,244 2850,246 L2912,270 Q2921,276 2921,288 L2921,362 Q2921,374 2912,380 L2866,413 Q2856,418 2846,414 L2778,388 Q2765,382 2765,370 L2765,300 Q2765,288 2774,280 Z" fill="#e1e7ee"/>
<path d="M2800,276 Q2812,260 2828,255 L2880,268 Q2898,274 2890,286 Q2878,300 2861,304 L2806,291 Q2788,286 2800,276 Z" fill="#fff"/>
<path d="M2777,322 Q2777,312 2790,314 L2838,324 Q2852,330 2852,345 L2852,388 Q2850,400 2836,398 L2790,386 Q2777,382 2777,370 Z" fill="#fff"/>
<path d="M2873,332 Q2875,322 2885,315 L2905,298 Q2917,290 2917,303 L2917,356 Q2915,368 2905,377 L2887,392 Q2873,400 2873,386 Z" fill="#fff"/>
<ellipse cx="2863" cy="320.6" rx="13.5" ry="13.5" fill="#fff"/>
<ellipse cx="2779" cy="297" rx="7.5" ry="12" fill="#fff" transform="rotate(25 2779 297)"/>
<ellipse cx="2863" cy="404" rx="13.5" ry="5.5" fill="#fff" transform="rotate(-12 2863 404)"/>
<ellipse cx="2913" cy="280" rx="2" ry="12" fill="#fff" transform="rotate(-38 2913 280)"/>
<path d="M2822,342 L2822,254" stroke="#a7a7e6" stroke-width="1.5"/><path d="M2822,239 L2822,254 M2822,298 L2822,320" stroke="#1a1ab8" stroke-width="2.6"/>
<path d="M2822,342 L2764,390" stroke="#e2a6a6" stroke-width="1.5"/><path d="M2764,390 L2781,376" stroke="#c0302a" stroke-width="2.6"/>
<path d="M2822,342 L2924,370" stroke="#9fd49f" stroke-width="1.5"/><path d="M2853,350 L2873,355 M2911,366 L2924,370" stroke="#2d8a2d" stroke-width="2.6"/>
<text x="2822" y="233" font-size="22" fill="#1a1ab8" text-anchor="middle">Z</text>
<text x="2755" y="408" font-size="22" fill="#c0302a" text-anchor="middle">X</text>
<text x="2938" y="384" font-size="22" fill="#2d8a2d" text-anchor="middle">Y</text>
<text x="0" y="0" font-size="20" fill="#111" transform="translate(2792,352) rotate(15)">Right</text>
<text x="0" y="0" font-size="17" fill="#111" font-style="italic" transform="translate(2883,362) rotate(-38) skewX(-10)">Back</text>
<text x="0" y="0" font-size="16" fill="#111" transform="translate(2862,271) rotate(152)">Top</text>
<path d="M2916,455 L2934,445 L2952,452 L2952,472 L2934,481 L2916,472 Z" fill="#dcdcdc" stroke="#333" stroke-width="2"/><path d="M2916,455 L2934,462 L2952,452 M2934,462 L2934,481" fill="none" stroke="#333" stroke-width="1.6"/><path d="M2916,455 L2934,462 L2934,481 L2916,472 Z" fill="#9a9a9a"/><path d="M2968.5,458.5 L2983.5,458.5 L2976,466 Z" fill="#333"/>
</svg>
</body></html>
